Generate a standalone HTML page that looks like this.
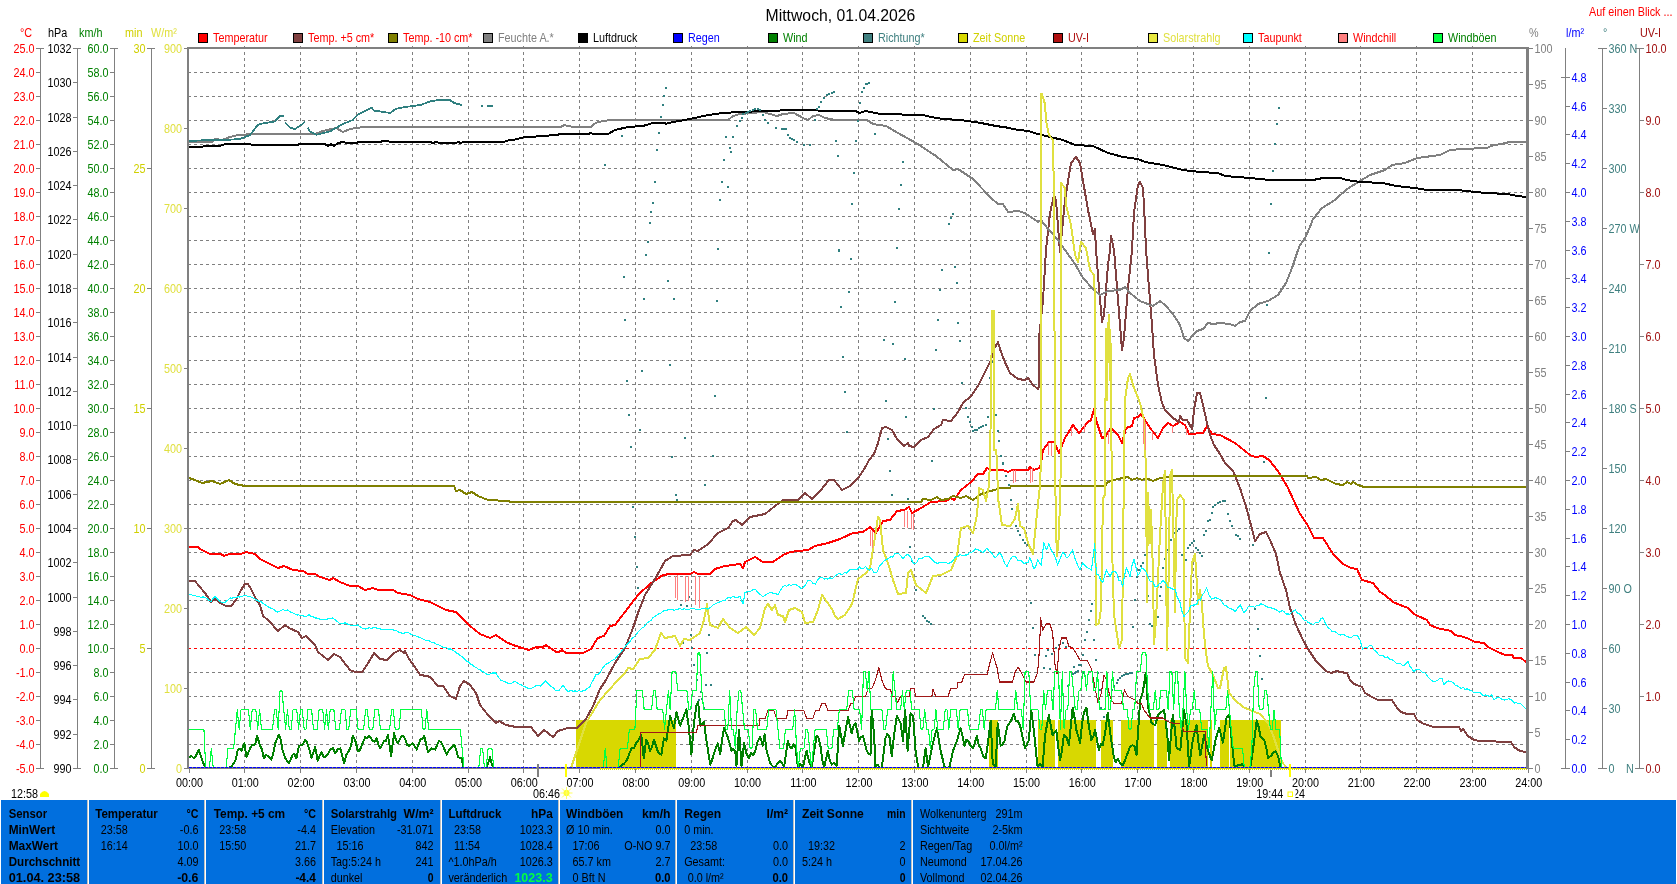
<!DOCTYPE html>
<html lang="de"><head><meta charset="utf-8"><title>Mittwoch, 01.04.2026</title>
<style>html,body{margin:0;padding:0;background:#fff;overflow:hidden}svg{display:block;will-change:transform;opacity:0.999}</style></head>
<body>
<svg width="1677" height="884" viewBox="0 0 1677 884" font-family="'Liberation Sans', Arial, sans-serif" font-size="12">
<rect x="0.0" y="0.0" width="1677.0" height="884.0" fill="#ffffff"/>
<text transform="translate(840.5,20.7) scale(0.985,1)" font-size="16" fill="#000" text-anchor="middle">Mittwoch, 01.04.2026</text>
<text transform="translate(1672.5,16.0) scale(0.9,1)" font-size="12" fill="#ff0000" text-anchor="end">Auf einen Blick ...</text>
<g shape-rendering="crispEdges">
<rect x="198.5" y="33.5" width="9" height="9" fill="#ff0000" stroke="#000" stroke-width="1"/>
<rect x="293.5" y="33.5" width="9" height="9" fill="#804040" stroke="#000" stroke-width="1"/>
<rect x="388.5" y="33.5" width="9" height="9" fill="#808000" stroke="#000" stroke-width="1"/>
<rect x="483.5" y="33.5" width="9" height="9" fill="#808080" stroke="#000" stroke-width="1"/>
<rect x="578.5" y="33.5" width="9" height="9" fill="#000000" stroke="#000" stroke-width="1"/>
<rect x="673.5" y="33.5" width="9" height="9" fill="#0000ff" stroke="#000" stroke-width="1"/>
<rect x="768.5" y="33.5" width="9" height="9" fill="#008000" stroke="#000" stroke-width="1"/>
<rect x="863.5" y="33.5" width="9" height="9" fill="#408080" stroke="#000" stroke-width="1"/>
<rect x="958.5" y="33.5" width="9" height="9" fill="#d8d800" stroke="#000" stroke-width="1"/>
<rect x="1053.5" y="33.5" width="9" height="9" fill="#b01010" stroke="#000" stroke-width="1"/>
<rect x="1148.5" y="33.5" width="9" height="9" fill="#e8e840" stroke="#000" stroke-width="1"/>
<rect x="1243.5" y="33.5" width="9" height="9" fill="#00ffff" stroke="#000" stroke-width="1"/>
<rect x="1338.5" y="33.5" width="9" height="9" fill="#ff8080" stroke="#000" stroke-width="1"/>
<rect x="1433.5" y="33.5" width="9" height="9" fill="#00ff40" stroke="#000" stroke-width="1"/>
</g>
<text transform="translate(213.0,42.0) scale(0.9,1)" font-size="12" fill="#ff0000" text-anchor="start">Temperatur</text>
<text transform="translate(308.0,42.0) scale(0.9,1)" font-size="12" fill="#ff0000" text-anchor="start">Temp. +5 cm*</text>
<text transform="translate(403.0,42.0) scale(0.9,1)" font-size="12" fill="#ff0000" text-anchor="start">Temp. -10 cm*</text>
<text transform="translate(498.0,42.0) scale(0.9,1)" font-size="12" fill="#808080" text-anchor="start">Feuchte A.*</text>
<text transform="translate(593.0,42.0) scale(0.9,1)" font-size="12" fill="#000000" text-anchor="start">Luftdruck</text>
<text transform="translate(688.0,42.0) scale(0.9,1)" font-size="12" fill="#0000ff" text-anchor="start">Regen</text>
<text transform="translate(783.0,42.0) scale(0.9,1)" font-size="12" fill="#008000" text-anchor="start">Wind</text>
<text transform="translate(878.0,42.0) scale(0.9,1)" font-size="12" fill="#408080" text-anchor="start">Richtung*</text>
<text transform="translate(973.0,42.0) scale(0.9,1)" font-size="12" fill="#d0d000" text-anchor="start">Zeit Sonne</text>
<text transform="translate(1068.0,42.0) scale(0.9,1)" font-size="12" fill="#b01010" text-anchor="start">UV-I</text>
<text transform="translate(1163.0,42.0) scale(0.9,1)" font-size="12" fill="#e0e040" text-anchor="start">Solarstrahlg</text>
<text transform="translate(1258.0,42.0) scale(0.9,1)" font-size="12" fill="#ff0000" text-anchor="start">Taupunkt</text>
<text transform="translate(1353.0,42.0) scale(0.9,1)" font-size="12" fill="#ff0000" text-anchor="start">Windchill</text>
<text transform="translate(1448.0,42.0) scale(0.9,1)" font-size="12" fill="#008000" text-anchor="start">Windböen</text>
<g shape-rendering="crispEdges" stroke="#808080" stroke-width="1" stroke-dasharray="3 3">
<line x1="188" y1="72.5" x2="1524" y2="72.5"/>
<line x1="188" y1="96.5" x2="1524" y2="96.5"/>
<line x1="188" y1="120.5" x2="1524" y2="120.5"/>
<line x1="188" y1="144.5" x2="1524" y2="144.5"/>
<line x1="188" y1="168.5" x2="1524" y2="168.5"/>
<line x1="188" y1="192.5" x2="1524" y2="192.5"/>
<line x1="188" y1="216.5" x2="1524" y2="216.5"/>
<line x1="188" y1="240.5" x2="1524" y2="240.5"/>
<line x1="188" y1="264.5" x2="1524" y2="264.5"/>
<line x1="188" y1="288.5" x2="1524" y2="288.5"/>
<line x1="188" y1="312.5" x2="1524" y2="312.5"/>
<line x1="188" y1="336.5" x2="1524" y2="336.5"/>
<line x1="188" y1="360.5" x2="1524" y2="360.5"/>
<line x1="188" y1="384.5" x2="1524" y2="384.5"/>
<line x1="188" y1="408.5" x2="1524" y2="408.5"/>
<line x1="188" y1="432.5" x2="1524" y2="432.5"/>
<line x1="188" y1="456.5" x2="1524" y2="456.5"/>
<line x1="188" y1="480.5" x2="1524" y2="480.5"/>
<line x1="188" y1="504.5" x2="1524" y2="504.5"/>
<line x1="188" y1="528.5" x2="1524" y2="528.5"/>
<line x1="188" y1="552.5" x2="1524" y2="552.5"/>
<line x1="188" y1="576.5" x2="1524" y2="576.5"/>
<line x1="188" y1="600.5" x2="1524" y2="600.5"/>
<line x1="188" y1="624.5" x2="1524" y2="624.5"/>
<line x1="188" y1="672.5" x2="1524" y2="672.5"/>
<line x1="188" y1="696.5" x2="1524" y2="696.5"/>
<line x1="188" y1="720.5" x2="1524" y2="720.5"/>
<line x1="188" y1="744.5" x2="1524" y2="744.5"/>
<line x1="244.5" y1="46" x2="244.5" y2="767"/>
<line x1="300.5" y1="46" x2="300.5" y2="767"/>
<line x1="356.5" y1="46" x2="356.5" y2="767"/>
<line x1="412.5" y1="46" x2="412.5" y2="767"/>
<line x1="468.5" y1="46" x2="468.5" y2="767"/>
<line x1="523.5" y1="46" x2="523.5" y2="767"/>
<line x1="579.5" y1="46" x2="579.5" y2="767"/>
<line x1="635.5" y1="46" x2="635.5" y2="767"/>
<line x1="691.5" y1="46" x2="691.5" y2="767"/>
<line x1="747.5" y1="46" x2="747.5" y2="767"/>
<line x1="802.5" y1="46" x2="802.5" y2="767"/>
<line x1="858.5" y1="46" x2="858.5" y2="767"/>
<line x1="914.5" y1="46" x2="914.5" y2="767"/>
<line x1="970.5" y1="46" x2="970.5" y2="767"/>
<line x1="1026.5" y1="46" x2="1026.5" y2="767"/>
<line x1="1081.5" y1="46" x2="1081.5" y2="767"/>
<line x1="1137.5" y1="46" x2="1137.5" y2="767"/>
<line x1="1193.5" y1="46" x2="1193.5" y2="767"/>
<line x1="1249.5" y1="46" x2="1249.5" y2="767"/>
<line x1="1305.5" y1="46" x2="1305.5" y2="767"/>
<line x1="1360.5" y1="46" x2="1360.5" y2="767"/>
<line x1="1416.5" y1="46" x2="1416.5" y2="767"/>
<line x1="1472.5" y1="46" x2="1472.5" y2="767"/>
</g>
<line x1="188" y1="648.5" x2="1524" y2="648.5" stroke="#ff0000" stroke-width="1" stroke-dasharray="3 3" shape-rendering="crispEdges"/>
<g shape-rendering="crispEdges">
<rect x="576.0" y="720.0" width="99.9" height="49.0" fill="#d8d800"/>
<rect x="989.0" y="720.0" width="8.7" height="49.0" fill="#d8d800"/>
<rect x="1037.6" y="720.0" width="17.0" height="49.0" fill="#d8d800"/>
<rect x="1058.0" y="720.0" width="37.7" height="49.0" fill="#d8d800"/>
<rect x="1101.0" y="720.0" width="12.0" height="49.0" fill="#d8d800"/>
<rect x="1121.0" y="720.0" width="32.5" height="49.0" fill="#d8d800"/>
<rect x="1157.3" y="720.0" width="9.2" height="49.0" fill="#d8d800"/>
<rect x="1170.3" y="720.0" width="37.6" height="49.0" fill="#d8d800"/>
<rect x="1209.9" y="720.0" width="2.5" height="49.0" fill="#d8d800"/>
<rect x="1219.9" y="720.0" width="9.1" height="49.0" fill="#d8d800"/>
<rect x="1230.4" y="720.0" width="50.1" height="49.0" fill="#d8d800"/>
</g>
<g shape-rendering="crispEdges" stroke-linejoin="round" stroke-linecap="butt">
<polyline points="189,547 198,547 200,549 210,554 221,554 224,556 229,554 241,554 246,552 255,554 260,559 278,568 284,566 293,570 303,571 308,574 315,574 320,577 330,580 333,578 340,582 350,586 358,586 365,590 373,588 378,590 393,590 398,593 410,595 418,599 430,602 438,606 446,610 456,612 463,619 470,626 480,634 490,638 496,635 506,642 513,645 529,650 536,647 543,647 546,645 556,652 559,652 562,650 566,653 583,653 591,649 597,639 600,637 604,636 610,626 615,625 628,608 638,595 650,584 663,575 670,574 690,574 694,572 698,574 710,574 715,569 725,566 740,564 743,568 745,562 755,557 763,562 773,562 783,555 790,552 808,550 815,546 828,543 840,539 853,533 863,532 870,527 876,533 883,521 890,520 897,511 904,510 909,507 912,513 921,508 931,502 946,501 951,498 954,500 961,490 971,482 978,474 983,474 987,468 991,470 1003,470 1008,472 1012,470 1028,470 1030,467 1034,470 1039,468 1041,464 1043,450 1049,442 1054,442 1059,453 1065,438 1073,425 1079,433 1088,422 1091,420 1094,409 1096,420 1102,438 1105,437 1111,428 1118,435 1122,443 1126,428 1132,426 1134,418 1138,417 1141,414 1145,420 1150,428 1158,438 1163,428 1168,423 1173,426 1180,422 1185,425 1189,434 1203,433 1207,426 1212,434 1220,435 1235,443 1250,455 1255,457 1263,456 1269,460 1278,471 1288,488 1300,514 1307,524 1314,538 1323,538 1333,554 1343,564 1351,568 1357,569 1362,580 1373,583 1380,592 1385,595 1393,602 1400,605 1408,608 1414,614 1418,616 1427,620 1430,625 1437,628 1451,631 1455,635 1464,637 1469,639 1475,642 1484,643 1488,647 1498,652 1505,655 1512,655 1514,658 1521,658 1526,662" fill="none" stroke="#ff0000" stroke-width="2"/>
<polyline points="189,581 195,581 199,586 205,593 211,602 215,599 220,603 226,606 231,606 236,600 241,590 245,584 248,584 251,589 256,599 260,605 263,616 268,620 278,631 285,625 289,628 298,632 302,638 306,636 315,645 318,652 328,660 334,654 340,657 350,670 355,672 362,672 367,665 374,653 380,659 387,660 394,653 400,650 404,653 405,651 409,659 415,667 420,675 427,676 430,677 438,686 443,686 450,696 456,699 460,686 464,681 470,685 476,693 480,705 488,715 496,723 499,721 506,725 516,727 531,727 538,736 544,730 553,737 558,731 568,728 577,728 586,719 593,706 600,689 606,680 615,663 625,648 633,628 638,613 645,595 655,579 665,561 673,556 690,555 694,550 698,551 708,544 718,533 728,528 733,521 736,520 742,525 750,517 765,514 775,506 782,501 783,500 798,500 805,493 812,499 820,491 829,480 834,480 842,490 850,486 859,477 866,466 869,460 874,454 878,443 882,428 886,427 892,430 897,439 904,446 908,443 909,446 914,447 921,440 928,437 934,429 941,425 943,420 951,421 958,412 963,403 971,396 978,386 986,370 991,360 994,349 998,342 1000,349 1004,360 1010,373 1018,379 1025,380 1028,378 1033,385 1038,389 1039,386 1039,338 1043,300 1046,250 1050,213 1054,195 1056,200 1060,252 1065,200 1071,163 1076,157 1080,163 1088,210 1093,234 1095,229 1096,250 1099,288 1102,322 1104,315 1108,265 1110,250 1111,236 1114,250 1118,300 1122,350 1124,338 1128,288 1132,250 1134,213 1138,185 1140,182 1143,188 1145,225 1146,250 1149,288 1152,325 1154,355 1158,385 1162,403 1165,410 1173,418 1179,422 1180,416 1183,420 1187,420 1192,429 1194,410 1197,393 1200,393 1203,405 1207,423 1210,435 1214,445 1220,454 1225,463 1233,471 1240,488 1247,510 1253,533 1255,541 1260,534 1266,532 1270,540 1276,554 1280,573 1286,590 1290,608 1296,625 1303,640 1308,649 1316,661 1326,671 1331,673 1337,671 1340,672 1347,673 1350,680 1354,684 1362,687 1365,693 1372,697 1378,700 1392,700 1397,708 1401,712 1407,714 1414,714 1417,720 1424,724 1434,727 1459,727 1461,731 1463,729 1468,736 1474,740 1480,741 1494,741 1498,742 1511,742 1514,747 1520,751 1526,752" fill="none" stroke="#804040" stroke-width="2"/>
<polyline points="189,478 195,480 202,483 212,481 220,484 229,480 235,484 245,486 454,486 456,491 460,490 466,494 472,492 478,496 488,500 508,501 511,502 921,502 923,499 931,500 937,497 941,500 948,499 953,496 961,498 966,496 973,500 981,494 991,491 1001,488 1010,488 1011,486 1105,486 1108,482 1118,479 1128,477 1132,480 1137,478 1142,480 1146,478 1153,481 1160,478 1175,476 1307,476 1308,478 1316,477 1321,480 1326,479 1336,484 1343,485 1347,482 1351,484 1353,482 1358,485 1364,487 1526,487" fill="none" stroke="#808000" stroke-width="2"/>
<polyline points="189,142 212,142 215,139 222,140 230,137 238,135 255,134 315,134 323,131 336,128 343,132 350,129 363,127 561,127 564,125 573,127 591,127 594,124 598,122 610,120 728,120 733,116 740,114 763,112 770,114 777,116 783,114 794,113 803,118 808,120 813,116 819,115 825,118 835,120 867,120 873,124 886,126 898,133 916,143 936,156 953,170 958,169 973,179 991,198 998,204 1003,204 1008,212 1018,211 1025,213 1038,222 1041,220 1048,229 1058,240 1065,250 1075,264 1083,278 1093,289 1100,295 1108,291 1120,290 1125,287 1130,293 1140,301 1153,306 1160,301 1165,305 1173,314 1180,325 1184,338 1188,341 1193,335 1197,331 1203,329 1208,323 1213,324 1220,323 1230,324 1235,326 1240,322 1245,321 1250,311 1258,304 1268,301 1278,295 1286,283 1292,268 1298,250 1300,245 1305,238 1310,227 1313,219 1322,208 1335,200 1347,189 1360,181 1370,175 1385,170 1392,165 1405,163 1417,158 1440,155 1450,150 1462,149 1487,148 1491,146 1510,142 1526,142" fill="none" stroke="#808080" stroke-width="2"/>
<polyline points="189,147 217,146 220,146 225,144 250,144 252,145 297,145 300,144 325,144 328,146 331,144 334,146 338,143 343,142 347,143 355,143 360,142 380,142 383,141 388,141 390,142 430,142 433,143 436,142 440,143 456,143 458,142 461,143 463,142 503,142 510,140 513,140 525,137 548,136 550,135 556,135 561,134 588,134 591,133 593,134 600,134 608,134 615,130 628,127 643,126 653,123 665,123 666,124 668,123 690,119 708,115 723,113 740,112 765,111 795,110 840,111 856,111 859,113 866,111 880,114 923,115 931,117 943,119 961,120 981,123 996,126 1010,128 1012,129 1028,131 1038,134 1050,137 1063,140 1075,145 1093,146 1108,153 1123,157 1138,159 1145,162 1163,165 1183,170 1200,172 1218,173 1225,176 1250,178 1270,180 1313,180 1323,178 1341,178 1346,180 1361,182 1383,183 1396,186 1415,188 1427,190 1457,190 1475,192 1487,193 1507,194 1518,196 1526,197" fill="none" stroke="#000000" stroke-width="2"/>
<polyline points="189.0,757.1 191.4,756.0 193.8,758.3 196.3,755.2 198.8,749.5 202.5,760.8 205.0,767.6 207.0,767.6 209.0,767.6 210.9,767.6 212.9,767.6 214.9,767.6 216.9,767.6 218.9,767.6 220.9,767.6 222.9,767.6 224.8,767.6 226.8,767.6 228.8,767.6 231.3,766.7 233.8,763.3 235.7,759.5 237.6,750.8 239.5,748.6 241.4,750.8 244.4,743.3 246.4,757.1 250.1,748.3 252.6,744.5 255.1,744.5 257.1,735.8 260.1,745.8 262.0,749.6 263.9,758.3 265.8,755.1 267.7,755.8 271.4,759.6 273.3,753.1 275.2,743.3 278.9,734.5 280.8,740.1 282.7,750.8 285.2,758.3 288.9,763.3 290.8,759.1 292.7,754.5 294.6,754.4 296.5,758.3 299.0,745.8 302.7,744.5 305.2,739.5 307.1,742.5 309.0,748.3 311.5,758.3 315.2,747.0 317.7,760.8 319.6,755.9 321.5,752.0 323.4,756.9 325.3,757.1 327.8,754.1 330.3,749.5 332.8,748.0 335.3,753.3 337.8,749.2 340.3,748.3 344.0,763.3 346.5,754.6 349.0,750.8 350.9,745.9 352.8,735.8 355.3,740.8 357.8,750.8 359.7,750.5 361.6,745.8 365.3,737.0 367.2,738.5 369.1,735.8 372.8,740.8 374.7,741.8 376.6,738.3 378.5,745.0 380.4,748.3 384.1,740.8 386.0,740.8 387.9,734.5 391.1,755.8 394.1,733.3 396.0,740.4 397.9,743.3 401.6,735.8 403.5,735.9 405.4,739.5 407.3,745.1 409.2,745.8 412.9,743.3 414.8,746.3 416.7,749.5 420.4,739.5 422.3,739.4 424.2,735.8 427.9,752.0 429.8,750.6 431.7,748.3 435.4,749.5 437.3,744.7 439.2,740.8 441.1,742.3 443.0,745.8 446.7,754.5 448.6,750.9 450.5,748.3 454.2,744.5 456.1,749.5 458.0,757.1 461.7,758.3 463.5,767.6 465.4,767.6 467.4,767.6 469.3,767.6 471.3,767.6 473.2,767.6 475.1,767.6 477.1,767.6 479.0,767.6 481.0,767.6 482.9,767.6 484.9,767.6 486.8,767.6 490.0,757.1 493.0,768.0 501.1,768.0 503.0,768.0 504.9,768.0 506.7,768.0 508.6,768.0 510.4,768.0 512.3,768.0 514.2,768.0 516.0,768.0 517.9,768.0 519.7,768.0 521.6,768.0 523.4,768.0 525.3,768.0 527.2,768.0 529.0,768.0 530.9,768.0 532.7,768.0 534.6,768.0 536.4,768.0 538.3,768.0 540.2,768.0 542.0,768.0 543.9,768.0 545.7,768.0 547.6,768.0 549.5,768.0 551.3,768.0 553.2,768.0 555.0,768.0 556.9,768.0 558.7,768.0 560.6,768.0 562.5,768.0 564.3,768.0 566.2,768.0 568.0,768.0 569.9,768.0 571.7,768.0 573.6,768.0 575.5,768.0 577.3,768.0 579.2,768.0 581.0,768.0 582.9,768.0 584.8,768.0 586.6,768.0 588.5,768.0 590.3,768.0 592.2,768.0 594.0,768.0 595.9,768.0 597.8,768.0 599.6,768.0 601.5,768.0 603.3,768.0 605.2,768.0 607.0,768.0 608.9,768.0 610.8,768.0 612.6,768.0 614.5,768.0 616.3,768.0 618.2,767.9 620.1,767.1 622.0,764.7 623.9,763.8 625.7,761.7 627.6,758.3 629.7,752.5 631.7,748.2 633.8,748.3 636.3,743.0 638.8,739.5 641.3,734.5 643.8,758.3 646.3,739.5 648.2,743.6 650.1,750.8 652.0,747.3 653.9,739.5 657.6,750.8 659.5,754.0 661.4,754.5 663.9,738.3 666.4,740.8 670.1,715.7 672.0,722.7 673.9,728.3 676.4,712.0 678.3,719.3 680.2,725.7 683.9,715.7 686.4,709.5 688.9,728.3 691.4,754.5 693.9,723.2 696.4,705.7 698.2,702.0 700.2,725.7 703.9,722.0 706.5,740.8 710.2,764.6 712.1,760.1 714.0,753.3 717.7,743.3 720.2,754.5 722.1,738.9 724.0,728.3 727.7,737.0 729.6,743.5 731.5,750.8 733.4,749.0 735.3,752.0 736.5,765.8 739.0,729.5 741.5,765.8 744.0,743.3 746.5,753.6 749.0,758.3 751.1,752.7 753.2,755.5 755.3,750.8 757.8,740.9 760.3,737.0 762.8,745.8 764.6,734.5 766.6,750.8 770.3,763.3 772.8,766.5 775.3,767.1 777.8,762.8 780.3,760.8 782.2,763.3 784.1,767.1 787.8,740.8 789.7,746.9 791.6,748.3 793.5,744.3 795.4,747.0 797.9,767.1 800.4,764.0 802.9,767.1 806.6,750.8 809.1,761.9 811.6,767.1 814.1,751.5 816.6,735.8 818.5,737.9 820.4,745.8 822.3,759.9 824.2,767.1 827.9,750.8 829.8,760.8 831.7,764.6 834.2,762.5 836.7,765.8 839.2,725.7 842.9,745.8 845.5,730.9 848.0,717.0 851.7,733.3 853.6,725.7 855.5,723.2 859.2,740.8 861.1,737.0 863.0,735.8 866.7,750.8 868.6,753.5 870.5,754.5 871.7,709.5 874.2,735.8 875.5,767.1 877.6,764.7 879.7,768.0 881.8,767.1 885.5,738.3 887.4,733.9 889.3,735.8 891.8,755.8 894.3,733.4 896.8,715.7 900.5,723.2 903.0,740.8 905.1,709.5 907.6,750.8 910.6,713.2 913.1,715.7 915.6,750.8 918.1,767.1 920.6,768.0 923.1,767.1 925.6,748.3 928.1,767.1 931.8,748.3 934.3,737.6 936.9,728.3 940.6,750.8 942.5,758.4 944.4,767.1 946.9,767.8 949.4,767.1 953.1,750.8 955.0,745.6 956.9,740.8 960.6,728.3 962.5,736.2 964.4,745.8 966.3,740.0 968.2,740.8 970.7,746.1 973.2,748.3 976.9,735.8 978.8,745.3 980.7,748.3 983.2,756.6 985.7,758.3 988.2,740.8 990.7,720.7 992.7,763.3 995.7,767.1 997.7,723.2 1000.7,745.8 1002.6,744.4 1004.5,740.8 1007.0,727.0 1011.3,720.0 1013.8,713.9 1015.9,721.1 1017.9,721.2 1020.0,725.2 1022.5,736.6 1025.0,747.8 1026.9,744.7 1028.8,740.2 1031.3,710.2 1033.8,730.2 1036.3,755.3 1037.6,766.5 1040.1,764.0 1042.6,766.5 1045.1,735.2 1048.8,715.2 1050.7,725.3 1052.6,735.2 1056.3,730.2 1058.2,746.3 1060.1,760.3 1062.0,750.1 1063.9,735.2 1066.4,737.0 1068.9,745.3 1072.6,707.7 1074.5,717.4 1076.4,730.2 1080.1,742.7 1082.0,724.4 1083.9,712.7 1086.4,707.7 1088.9,726.4 1091.4,740.2 1093.3,736.7 1095.2,730.2 1098.9,750.3 1100.8,744.1 1102.7,745.3 1105.2,732.9 1107.7,712.7 1110.2,732.7 1113.9,757.8 1115.8,762.1 1117.7,759.0 1120.2,763.4 1122.7,765.3 1125.2,760.0 1127.7,752.8 1130.2,746.3 1132.7,745.3 1134.6,746.4 1136.5,755.3 1140.2,700.2 1142.7,692.7 1145.8,672.6 1147.8,705.2 1151.5,722.7 1153.4,724.2 1155.3,725.2 1157.8,715.4 1160.3,712.7 1164.0,710.2 1165.9,722.7 1167.8,740.2 1169.0,760.3 1170.9,735.7 1172.8,715.2 1174.7,727.7 1176.6,747.8 1180.3,750.3 1182.2,730.0 1184.1,710.2 1186.6,725.2 1189.1,766.5 1192.8,740.2 1194.7,732.2 1196.6,725.2 1198.5,743.0 1200.4,755.3 1204.1,735.2 1206.0,742.9 1207.9,750.3 1211.6,760.3 1213.5,751.4 1215.4,740.2 1219.1,727.7 1221.0,735.2 1222.9,742.7 1226.6,717.7 1229.2,715.2 1231.7,740.2 1234.2,765.3 1236.3,766.6 1238.3,765.0 1240.4,765.3 1242.4,763.8 1244.4,768.0 1246.4,768.0 1248.4,768.0 1250.4,766.5 1252.3,755.0 1254.2,740.2 1256.7,720.2 1258.6,726.9 1260.5,736.5 1264.2,740.2 1266.1,746.8 1268.0,757.8 1271.7,755.3 1273.6,751.7 1275.5,751.5 1278.0,755.6 1280.5,768.0" fill="none" stroke="#008000" stroke-width="2"/>
<g fill="#2f7f7f">
<rect x="480.8" y="104.6" width="2" height="2"/>
<rect x="487.0" y="104.6" width="2" height="2"/>
<rect x="489.0" y="104.6" width="2" height="2"/>
<rect x="490.8" y="104.6" width="2" height="2"/>
<rect x="604.0" y="163.7" width="2" height="2"/>
<rect x="620.8" y="135.0" width="2" height="2"/>
<rect x="644.6" y="253.9" width="2" height="2"/>
<rect x="646.9" y="240.6" width="2" height="2"/>
<rect x="648.9" y="221.8" width="2" height="2"/>
<rect x="649.9" y="210.8" width="2" height="2"/>
<rect x="651.9" y="201.8" width="2" height="2"/>
<rect x="653.9" y="180.7" width="2" height="2"/>
<rect x="655.9" y="148.7" width="2" height="2"/>
<rect x="657.9" y="131.9" width="2" height="2"/>
<rect x="659.9" y="115.6" width="2" height="2"/>
<rect x="661.9" y="103.9" width="2" height="2"/>
<rect x="663.1" y="94.6" width="2" height="2"/>
<rect x="664.9" y="86.6" width="2" height="2"/>
<rect x="717.0" y="247.6" width="2" height="2"/>
<rect x="719.0" y="198.8" width="2" height="2"/>
<rect x="721.0" y="180.7" width="2" height="2"/>
<rect x="723.0" y="159.0" width="2" height="2"/>
<rect x="725.0" y="135.7" width="2" height="2"/>
<rect x="727.0" y="185.8" width="2" height="2"/>
<rect x="728.7" y="146.7" width="2" height="2"/>
<rect x="730.0" y="150.7" width="2" height="2"/>
<rect x="732.0" y="135.7" width="2" height="2"/>
<rect x="736.0" y="124.9" width="2" height="2"/>
<rect x="738.8" y="120.4" width="2" height="2"/>
<rect x="741.0" y="116.6" width="2" height="2"/>
<rect x="742.3" y="113.4" width="2" height="2"/>
<rect x="744.5" y="111.5" width="2" height="2"/>
<rect x="747.0" y="110.5" width="2" height="2"/>
<rect x="749.3" y="109.9" width="2" height="2"/>
<rect x="751.8" y="108.8" width="2" height="2"/>
<rect x="754.3" y="107.9" width="2" height="2"/>
<rect x="756.8" y="108.0" width="2" height="2"/>
<rect x="759.3" y="108.6" width="2" height="2"/>
<rect x="761.8" y="114.0" width="2" height="2"/>
<rect x="764.3" y="118.6" width="2" height="2"/>
<rect x="767.3" y="121.6" width="2" height="2"/>
<rect x="774.8" y="126.7" width="2" height="2"/>
<rect x="781.0" y="127.9" width="2" height="2"/>
<rect x="783.0" y="127.9" width="2" height="2"/>
<rect x="784.5" y="127.9" width="2" height="2"/>
<rect x="786.8" y="133.7" width="2" height="2"/>
<rect x="789.3" y="136.7" width="2" height="2"/>
<rect x="791.0" y="137.9" width="2" height="2"/>
<rect x="793.0" y="139.0" width="2" height="2"/>
<rect x="795.6" y="140.9" width="2" height="2"/>
<rect x="802.6" y="143.7" width="2" height="2"/>
<rect x="808.9" y="143.7" width="2" height="2"/>
<rect x="813.6" y="118.6" width="2" height="2"/>
<rect x="815.6" y="107.9" width="2" height="2"/>
<rect x="817.6" y="106.0" width="2" height="2"/>
<rect x="819.6" y="100.6" width="2" height="2"/>
<rect x="823.2" y="97.0" width="2" height="2"/>
<rect x="825.7" y="94.0" width="2" height="2"/>
<rect x="828.2" y="92.8" width="2" height="2"/>
<rect x="830.7" y="91.6" width="2" height="2"/>
<rect x="833.2" y="90.8" width="2" height="2"/>
<rect x="834.9" y="139.7" width="2" height="2"/>
<rect x="836.9" y="154.7" width="2" height="2"/>
<rect x="837.7" y="248.9" width="2" height="2"/>
<rect x="850.0" y="257.6" width="2" height="2"/>
<rect x="851.0" y="202.8" width="2" height="2"/>
<rect x="852.7" y="171.7" width="2" height="2"/>
<rect x="855.0" y="140.2" width="2" height="2"/>
<rect x="857.0" y="119.6" width="2" height="2"/>
<rect x="858.7" y="101.6" width="2" height="2"/>
<rect x="860.7" y="90.8" width="2" height="2"/>
<rect x="862.7" y="86.6" width="2" height="2"/>
<rect x="864.5" y="83.0" width="2" height="2"/>
<rect x="866.3" y="82.6" width="2" height="2"/>
<rect x="868.0" y="81.8" width="2" height="2"/>
<rect x="873.7" y="132.9" width="2" height="2"/>
<rect x="896.0" y="246.9" width="2" height="2"/>
<rect x="897.8" y="207.8" width="2" height="2"/>
<rect x="899.8" y="183.8" width="2" height="2"/>
<rect x="901.8" y="161.0" width="2" height="2"/>
<rect x="947.9" y="222.8" width="2" height="2"/>
<rect x="949.9" y="217.3" width="2" height="2"/>
<rect x="951.9" y="212.6" width="2" height="2"/>
<rect x="1278.0" y="106.6" width="2" height="2"/>
<rect x="1275.7" y="122.9" width="2" height="2"/>
<rect x="1274.0" y="142.7" width="2" height="2"/>
<rect x="1272.0" y="169.7" width="2" height="2"/>
<rect x="1270.0" y="202.8" width="2" height="2"/>
<rect x="1268.0" y="251.9" width="2" height="2"/>
<rect x="644.6" y="254.0" width="2" height="2"/>
<rect x="622.8" y="275.8" width="2" height="2"/>
<rect x="666.9" y="279.8" width="2" height="2"/>
<rect x="642.8" y="297.8" width="2" height="2"/>
<rect x="672.9" y="297.8" width="2" height="2"/>
<rect x="716.0" y="299.8" width="2" height="2"/>
<rect x="623.8" y="318.9" width="2" height="2"/>
<rect x="668.9" y="363.7" width="2" height="2"/>
<rect x="640.8" y="369.7" width="2" height="2"/>
<rect x="625.8" y="379.7" width="2" height="2"/>
<rect x="714.0" y="394.8" width="2" height="2"/>
<rect x="627.8" y="413.8" width="2" height="2"/>
<rect x="638.8" y="428.8" width="2" height="2"/>
<rect x="683.9" y="436.8" width="2" height="2"/>
<rect x="629.8" y="445.8" width="2" height="2"/>
<rect x="670.9" y="455.9" width="2" height="2"/>
<rect x="711.7" y="454.9" width="2" height="2"/>
<rect x="837.7" y="249.5" width="2" height="2"/>
<rect x="849.7" y="257.8" width="2" height="2"/>
<rect x="848.0" y="290.8" width="2" height="2"/>
<rect x="839.9" y="305.8" width="2" height="2"/>
<rect x="841.9" y="355.9" width="2" height="2"/>
<rect x="843.9" y="390.7" width="2" height="2"/>
<rect x="846.0" y="430.8" width="2" height="2"/>
<rect x="893.8" y="300.8" width="2" height="2"/>
<rect x="883.0" y="338.7" width="2" height="2"/>
<rect x="891.8" y="342.7" width="2" height="2"/>
<rect x="903.8" y="357.9" width="2" height="2"/>
<rect x="885.0" y="399.8" width="2" height="2"/>
<rect x="904.8" y="415.8" width="2" height="2"/>
<rect x="886.8" y="437.8" width="2" height="2"/>
<rect x="940.9" y="268.8" width="2" height="2"/>
<rect x="953.9" y="265.8" width="2" height="2"/>
<rect x="955.9" y="281.8" width="2" height="2"/>
<rect x="938.9" y="288.6" width="2" height="2"/>
<rect x="936.9" y="318.9" width="2" height="2"/>
<rect x="956.9" y="321.9" width="2" height="2"/>
<rect x="958.9" y="339.7" width="2" height="2"/>
<rect x="934.9" y="348.7" width="2" height="2"/>
<rect x="960.9" y="381.7" width="2" height="2"/>
<rect x="932.9" y="407.8" width="2" height="2"/>
<rect x="930.9" y="459.9" width="2" height="2"/>
<rect x="964.9" y="406.8" width="2" height="2"/>
<rect x="966.9" y="415.8" width="2" height="2"/>
<rect x="968.9" y="420.8" width="2" height="2"/>
<rect x="970.9" y="425.8" width="2" height="2"/>
<rect x="972.0" y="429.8" width="2" height="2"/>
<rect x="974.0" y="429.3" width="2" height="2"/>
<rect x="976.0" y="428.8" width="2" height="2"/>
<rect x="978.0" y="427.0" width="2" height="2"/>
<rect x="979.7" y="425.6" width="2" height="2"/>
<rect x="982.0" y="424.6" width="2" height="2"/>
<rect x="984.7" y="423.8" width="2" height="2"/>
<rect x="987.0" y="415.8" width="2" height="2"/>
<rect x="989.0" y="376.7" width="2" height="2"/>
<rect x="991.0" y="361.0" width="2" height="2"/>
<rect x="993.0" y="408.8" width="2" height="2"/>
<rect x="995.0" y="413.8" width="2" height="2"/>
<rect x="997.0" y="429.8" width="2" height="2"/>
<rect x="998.0" y="439.8" width="2" height="2"/>
<rect x="1000.0" y="454.9" width="2" height="2"/>
<rect x="1002.0" y="462.9" width="2" height="2"/>
<rect x="1266.0" y="303.6" width="2" height="2"/>
<rect x="1265.0" y="396.8" width="2" height="2"/>
<rect x="1262.7" y="460.6" width="2" height="2"/>
<rect x="1002.0" y="462.0" width="2" height="2"/>
<rect x="1005.0" y="474.5" width="2" height="2"/>
<rect x="1008.0" y="484.0" width="2" height="2"/>
<rect x="1009.8" y="499.0" width="2" height="2"/>
<rect x="1010.8" y="507.8" width="2" height="2"/>
<rect x="1012.8" y="519.0" width="2" height="2"/>
<rect x="1014.8" y="524.6" width="2" height="2"/>
<rect x="1016.5" y="530.4" width="2" height="2"/>
<rect x="1019.0" y="534.0" width="2" height="2"/>
<rect x="1021.5" y="538.6" width="2" height="2"/>
<rect x="1024.0" y="541.6" width="2" height="2"/>
<rect x="1026.5" y="544.0" width="2" height="2"/>
<rect x="1029.0" y="546.0" width="2" height="2"/>
<rect x="1029.8" y="601.7" width="2" height="2"/>
<rect x="1031.8" y="626.8" width="2" height="2"/>
<rect x="1033.8" y="653.8" width="2" height="2"/>
<rect x="1042.8" y="666.9" width="2" height="2"/>
<rect x="1044.8" y="654.8" width="2" height="2"/>
<rect x="1046.8" y="648.8" width="2" height="2"/>
<rect x="1048.8" y="667.6" width="2" height="2"/>
<rect x="1050.8" y="653.0" width="2" height="2"/>
<rect x="1054.6" y="646.8" width="2" height="2"/>
<rect x="1057.9" y="644.0" width="2" height="2"/>
<rect x="1061.6" y="641.8" width="2" height="2"/>
<rect x="1064.6" y="645.6" width="2" height="2"/>
<rect x="1072.9" y="665.6" width="2" height="2"/>
<rect x="1075.4" y="670.6" width="2" height="2"/>
<rect x="1077.9" y="664.0" width="2" height="2"/>
<rect x="1079.5" y="663.8" width="2" height="2"/>
<rect x="1081.6" y="654.0" width="2" height="2"/>
<rect x="1083.9" y="638.8" width="2" height="2"/>
<rect x="1085.9" y="630.8" width="2" height="2"/>
<rect x="1087.9" y="618.8" width="2" height="2"/>
<rect x="1089.9" y="609.8" width="2" height="2"/>
<rect x="1090.9" y="603.0" width="2" height="2"/>
<rect x="1092.9" y="639.0" width="2" height="2"/>
<rect x="1094.9" y="658.8" width="2" height="2"/>
<rect x="1096.7" y="671.9" width="2" height="2"/>
<rect x="1131.7" y="625.5" width="2" height="2"/>
<rect x="1134.0" y="598.7" width="2" height="2"/>
<rect x="1135.5" y="575.5" width="2" height="2"/>
<rect x="1138.0" y="569.0" width="2" height="2"/>
<rect x="1139.7" y="565.4" width="2" height="2"/>
<rect x="1141.7" y="562.0" width="2" height="2"/>
<rect x="1143.8" y="554.0" width="2" height="2"/>
<rect x="1146.8" y="595.0" width="2" height="2"/>
<rect x="1148.5" y="623.0" width="2" height="2"/>
<rect x="1151.0" y="625.0" width="2" height="2"/>
<rect x="1152.8" y="634.0" width="2" height="2"/>
<rect x="1154.8" y="621.8" width="2" height="2"/>
<rect x="1156.8" y="615.5" width="2" height="2"/>
<rect x="1158.8" y="594.7" width="2" height="2"/>
<rect x="1159.8" y="585.5" width="2" height="2"/>
<rect x="1161.8" y="566.7" width="2" height="2"/>
<rect x="1163.8" y="558.0" width="2" height="2"/>
<rect x="1165.8" y="548.7" width="2" height="2"/>
<rect x="1167.8" y="542.9" width="2" height="2"/>
<rect x="1169.8" y="538.6" width="2" height="2"/>
<rect x="1171.8" y="534.9" width="2" height="2"/>
<rect x="1173.8" y="531.6" width="2" height="2"/>
<rect x="1175.8" y="529.6" width="2" height="2"/>
<rect x="1177.8" y="527.9" width="2" height="2"/>
<rect x="1181.3" y="553.7" width="2" height="2"/>
<rect x="1183.3" y="547.4" width="2" height="2"/>
<rect x="1185.3" y="558.7" width="2" height="2"/>
<rect x="1187.3" y="546.7" width="2" height="2"/>
<rect x="1189.3" y="544.0" width="2" height="2"/>
<rect x="1191.3" y="541.6" width="2" height="2"/>
<rect x="1193.3" y="539.6" width="2" height="2"/>
<rect x="1195.3" y="546.7" width="2" height="2"/>
<rect x="1197.3" y="549.0" width="2" height="2"/>
<rect x="1198.9" y="552.4" width="2" height="2"/>
<rect x="1200.9" y="555.4" width="2" height="2"/>
<rect x="1203.0" y="533.6" width="2" height="2"/>
<rect x="1205.0" y="530.4" width="2" height="2"/>
<rect x="1207.0" y="520.4" width="2" height="2"/>
<rect x="1209.0" y="518.6" width="2" height="2"/>
<rect x="1211.0" y="512.0" width="2" height="2"/>
<rect x="1212.4" y="506.0" width="2" height="2"/>
<rect x="1214.4" y="503.6" width="2" height="2"/>
<rect x="1216.9" y="502.0" width="2" height="2"/>
<rect x="1219.4" y="501.0" width="2" height="2"/>
<rect x="1221.9" y="500.3" width="2" height="2"/>
<rect x="1224.4" y="499.6" width="2" height="2"/>
<rect x="1226.9" y="513.3" width="2" height="2"/>
<rect x="1228.9" y="519.6" width="2" height="2"/>
<rect x="1230.9" y="525.4" width="2" height="2"/>
<rect x="1234.9" y="533.6" width="2" height="2"/>
<rect x="1236.9" y="535.4" width="2" height="2"/>
<rect x="1238.9" y="537.9" width="2" height="2"/>
<rect x="1252.0" y="544.0" width="2" height="2"/>
<rect x="1254.4" y="608.0" width="2" height="2"/>
<rect x="1257.0" y="628.0" width="2" height="2"/>
<rect x="1259.0" y="654.8" width="2" height="2"/>
<rect x="1261.0" y="678.0" width="2" height="2"/>
<rect x="1263.0" y="461.0" width="2" height="2"/>
<rect x="1099.0" y="688.7" width="2" height="2"/>
<rect x="1103.0" y="715.5" width="2" height="2"/>
<rect x="1100.4" y="706.7" width="2" height="2"/>
<rect x="1111.0" y="689.0" width="2" height="2"/>
<rect x="1113.0" y="685.4" width="2" height="2"/>
<rect x="1115.5" y="681.6" width="2" height="2"/>
<rect x="1117.0" y="679.0" width="2" height="2"/>
<rect x="1119.0" y="677.0" width="2" height="2"/>
<rect x="1121.0" y="675.3" width="2" height="2"/>
<rect x="1123.0" y="674.0" width="2" height="2"/>
<rect x="1125.0" y="673.3" width="2" height="2"/>
<rect x="1126.7" y="672.9" width="2" height="2"/>
<rect x="1129.0" y="672.0" width="2" height="2"/>
<rect x="1131.0" y="671.6" width="2" height="2"/>
<rect x="1066.6" y="684.6" width="2" height="2"/>
<rect x="1071.6" y="672.9" width="2" height="2"/>
<rect x="1074.0" y="671.5" width="2" height="2"/>
<rect x="1076.6" y="669.9" width="2" height="2"/>
<rect x="1081.6" y="671.6" width="2" height="2"/>
<rect x="675.0" y="493.6" width="2" height="2"/>
<rect x="676.0" y="499.0" width="2" height="2"/>
<rect x="704.0" y="483.5" width="2" height="2"/>
<rect x="632.0" y="505.6" width="2" height="2"/>
<rect x="634.0" y="536.0" width="2" height="2"/>
<rect x="635.8" y="566.0" width="2" height="2"/>
<rect x="636.8" y="586.7" width="2" height="2"/>
<rect x="679.9" y="603.7" width="2" height="2"/>
<rect x="686.0" y="604.8" width="2" height="2"/>
<rect x="688.0" y="596.0" width="2" height="2"/>
<rect x="708.0" y="633.8" width="2" height="2"/>
<rect x="681.9" y="641.8" width="2" height="2"/>
<rect x="690.0" y="634.0" width="2" height="2"/>
<rect x="691.0" y="647.0" width="2" height="2"/>
<rect x="706.0" y="651.8" width="2" height="2"/>
<rect x="693.0" y="664.0" width="2" height="2"/>
<rect x="888.8" y="469.8" width="2" height="2"/>
<rect x="890.8" y="493.6" width="2" height="2"/>
<rect x="906.8" y="497.8" width="2" height="2"/>
<rect x="908.8" y="545.6" width="2" height="2"/>
<rect x="910.8" y="560.4" width="2" height="2"/>
<rect x="912.8" y="578.0" width="2" height="2"/>
<rect x="914.8" y="588.7" width="2" height="2"/>
<rect x="922.0" y="614.8" width="2" height="2"/>
<rect x="924.0" y="617.0" width="2" height="2"/>
<rect x="926.0" y="619.8" width="2" height="2"/>
<rect x="928.0" y="621.3" width="2" height="2"/>
<rect x="929.6" y="622.5" width="2" height="2"/>
<rect x="930.9" y="460.0" width="2" height="2"/>
<rect x="695.5" y="679.0" width="2" height="2"/>
<rect x="697.5" y="699.0" width="2" height="2"/>
<rect x="699.5" y="691.0" width="2" height="2"/>
<rect x="701.0" y="698.0" width="2" height="2"/>
<rect x="703.0" y="707.0" width="2" height="2"/>
<rect x="705.0" y="683.5" width="2" height="2"/>
<rect x="710.0" y="684.0" width="2" height="2"/>
</g>
<polyline points="189.0,141.0 210.0,140.0 225.0,140.0 240.0,139.0 250.0,135.0 257.6,125.0 262.0,123.5 275.0,121.4 280.0,115.6 284.0,115.6" fill="none" stroke="#2f7f7f" stroke-width="1.8"/>
<polyline points="285.0,122.6 290.0,127.6 295.0,129.0 302.7,124.0 305.0,121.5" fill="none" stroke="#2f7f7f" stroke-width="1.8"/>
<polyline points="307.7,127.6 310.0,131.5 316.5,134.7 330.0,131.4 342.8,124.0 352.8,120.0 357.8,114.6 371.6,107.6 374.0,110.6 390.4,113.0 395.4,109.0 405.4,107.0 420.4,105.0 430.4,101.4 440.4,99.6 449.2,99.6 454.2,103.0 461.7,105.0" fill="none" stroke="#2f7f7f" stroke-width="1.8"/>
<polyline points="640.8,767.7 640.8,732.7 696.4,732.7 697.7,725.9 759.0,725.9 759.8,718.9 765.3,718.4 767.8,710.9 774.0,710.9 776.6,718.4 786.6,718.4 787.8,710.9 804.0,710.9 806.6,718.4 812.9,718.4 815.4,710.9 819.0,710.9 821.7,703.9 825.4,703.9 828.0,710.9 848.0,710.9 850.5,703.9 853.0,703.9 855.5,696.4 865.5,696.4 868.0,688.8 871.7,688.8 875.5,680.0 878.8,667.5 881.8,680.0 885.5,688.8 890.5,690.0 893.0,696.4 895.5,696.4 897.5,702.6 900.5,696.4 909.3,696.4 910.6,688.8 914.3,688.8 915.6,696.4 931.9,696.4 933.0,689.0 935.6,696.4 948.0,696.4 950.6,688.8 956.9,688.8 958.0,682.6 961.9,682.0 964.4,674.6 987.0,674.6 992.5,653.0 997.0,667.5 999.5,682.0 1012.5,682.0 1015.0,672.6 1018.0,667.0 1021.3,672.6 1026.0,682.0 1033.8,682.0 1037.6,672.6 1039.6,647.6 1040.6,617.5 1042.6,630.0 1046.3,624.0 1050.0,624.0 1052.6,632.6 1055.0,665.0 1057.0,674.0 1058.9,650.0 1061.4,638.0 1066.4,638.0 1068.9,646.6 1072.6,647.6 1076.4,653.8 1080.0,660.0 1087.6,661.0 1091.4,668.9 1094.0,682.6 1096.4,695.0 1098.0,702.7 1101.4,692.7 1104.0,675.0 1106.4,680.0 1109.0,692.7 1111.4,700.0 1114.0,703.4 1121.5,703.4 1124.5,690.0 1127.7,696.4 1135.0,700.0 1137.7,703.4 1141.5,703.4 1144.0,710.0 1147.8,715.0 1150.0,718.0 1162.8,718.0 1165.3,720.0 1170.3,722.7 1180.3,724.0 1184.0,731.5 1205.4,731.5 1205.9,755.0 1206.6,766.5" fill="none" stroke="#a01818" stroke-width="1.1"/>
<polyline points="571,768 586,723 600,700 618,680 625,673 628,668 633,669 640,659 648,658 655,650 661,633 665,638 675,636 680,646 684,639 690,640 700,633 704,620 707,604 710,625 718,628 723,619 730,628 738,633 746,627 754,635 760,628 765,608 768,604 772,610 775,605 778,615 783,616 785,622 789,610 795,608 802,612 805,623 813,622 818,610 822,595 827,602 832,609 835,616 838,619 845,615 852,604 858,579 866,573 870,568 874,543 878,517 880,520 883,550 888,563 893,580 898,594 906,593 908,573 911,570 916,585 926,593 933,576 941,575 951,570 957,556 961,528 968,526 973,533 977,515 979,488 983,490 986,501 989,485 990,460 991,400 992,311 994,311 994,420 994,450 996,450 997,460 998,498 1002,525 1010,526 1015,519 1018,504 1020,526 1024,528 1028,543 1033,554 1036,523 1040,485 1041,460 1041,200 1041,94 1042,94 1045,104 1046,120 1049,135 1053,140 1054,200 1055,460 1056,530 1057,556 1059,535 1061,460 1061,250 1061,183 1065,188 1066,205 1071,225 1075,255 1078,262 1081,242 1086,248 1090,270 1094,275 1095,300 1095,500 1096,625 1099,623 1101,608 1103,498 1105,495 1105,470 1106,329 1107,400 1108,330 1109,315 1110,380 1110,330 1111,355 1112,545 1114,615 1119,648 1122,640 1123,560 1124,460 1125,400 1128,378 1130,374 1133,385 1140,403 1144,420 1146,470 1147,602 1148,493 1150,543 1151,510 1153,573 1154,644 1156,620 1160,535 1163,485 1165,471 1166,560 1167,650 1169,560 1170,475 1172,470 1174,560 1175,612 1176,535 1177,500 1180,495 1184,500 1184,585 1185,658 1188,663 1190,610 1192,563 1195,554 1197,585 1198,604 1200,590 1202,605 1204,635 1207,660 1208,666 1213,675 1218,688 1220,688 1224,668 1226,667 1229,693 1235,700 1243,707 1250,710 1260,714 1268,723 1273,735 1278,750 1282,762 1286,767" fill="none" stroke="#e0e040" stroke-width="2"/>
<polyline points="189.0,594.5 191.1,594.7 193.2,595.6 195.4,595.8 197.5,596.5 199.4,596.9 201.2,597.3 203.1,596.9 205.0,597.7 207.0,598.4 209.0,600.6 211.0,601.5 213.0,598.7 215.0,596.5 217.5,598.7 220.0,601.5 222.5,602.7 225.0,602.7 227.5,600.3 230.0,598.0 232.0,598.2 234.0,597.6 236.0,597.6 238.0,596.8 240.0,597.0 242.5,596.2 245.0,595.0 247.5,596.2 250.0,596.5 252.5,597.8 255.0,599.0 256.9,600.3 258.8,601.2 260.7,601.5 262.6,603.0 265.1,604.9 267.5,606.3 270.0,607.8 271.9,608.6 273.9,609.3 275.8,611.4 277.7,612.0 280.2,610.9 282.7,609.8 285.2,610.2 287.7,610.0 290.1,611.8 292.6,612.9 295.0,614.0 297.0,615.0 299.0,614.9 301.0,615.9 303.0,615.9 305.0,616.5 307.0,616.2 309.0,614.8 311.0,616.3 313.0,616.5 315.0,618.0 316.9,618.0 318.9,618.6 320.8,619.9 322.7,619.8 324.7,619.4 326.7,619.2 328.8,618.5 330.8,618.4 332.8,618.0 335.2,619.9 337.6,621.8 340.0,624.0 342.6,623.5 345.3,622.8 347.6,624.0 350.0,625.0 351.9,625.5 353.9,625.2 355.9,625.5 357.8,625.0 360.2,626.8 362.6,628.3 365.0,629.0 367.0,628.8 369.0,627.8 371.0,628.2 373.0,628.0 375.0,627.0 377.5,628.5 380.0,629.0 382.1,629.2 384.3,629.5 386.4,629.1 388.6,629.9 390.8,629.8 392.9,629.8 395.3,630.5 397.6,631.3 400.0,632.8 402.2,633.1 404.4,633.1 406.6,632.3 408.7,632.7 410.9,634.5 413.0,635.0 415.3,635.8 417.7,636.4 420.0,637.8 422.1,638.3 424.2,639.6 426.2,640.5 428.3,640.3 430.4,641.6 432.4,642.6 434.4,642.7 436.4,644.4 438.4,644.8 440.4,645.8 442.4,646.9 444.4,647.7 446.5,647.7 448.5,649.0 450.5,649.0 452.5,650.1 454.5,651.2 456.5,653.2 458.5,653.9 460.5,655.8 462.5,657.1 464.5,659.0 466.5,660.9 468.5,661.9 470.5,664.0 472.5,664.7 474.5,666.8 476.5,667.4 478.5,669.4 480.5,670.0 482.4,671.7 484.2,672.3 486.1,673.6 488.0,674.9 489.9,674.0 491.8,673.0 495.5,673.0 498.1,676.7 500.6,680.0 502.6,680.9 504.6,681.6 506.6,682.4 508.6,683.6 510.6,683.8 512.5,682.6 514.4,681.3 516.5,682.4 518.7,683.9 520.9,684.5 523.0,686.0 524.9,686.5 526.8,688.0 528.7,688.1 530.6,688.8 533.1,687.5 535.6,686.0 538.1,685.4 540.6,686.0 543.1,683.4 545.6,681.0 548.1,683.6 550.6,686.0 553.2,687.7 555.7,690.6 559.4,690.0 563.0,685.0 565.0,688.1 567.0,691.0 569.0,691.2 571.0,690.5 573.0,691.2 575.0,691.0 577.0,691.2 579.0,690.8 581.0,691.2 583.0,691.0 585.2,690.2 587.3,688.2 589.5,687.6 591.6,682.9 593.6,679.4 595.7,675.0 597.9,674.4 600.0,672.6 602.5,668.4 605.0,665.0 607.0,663.7 609.0,662.7 611.0,661.1 613.0,660.0 615.0,659.0 617.1,656.2 619.2,653.8 621.3,651.7 623.4,648.7 625.5,646.3 627.6,644.0 629.7,642.1 631.7,638.6 633.8,637.1 635.9,635.0 637.9,632.0 640.0,630.0 641.9,627.9 643.8,627.1 645.6,624.5 647.5,622.7 649.4,621.5 651.2,620.2 653.1,617.6 655.0,616.5 657.0,614.9 659.0,613.6 661.0,613.1 663.0,611.2 665.0,610.0 666.9,610.5 668.8,609.3 670.8,609.5 672.7,609.9 674.6,610.2 676.5,609.5 678.5,609.0 680.4,608.8 682.3,609.4 684.2,608.7 686.2,609.6 688.1,609.6 690.0,609.0 692.0,608.5 693.9,608.6 695.9,609.5 697.9,609.2 699.8,609.5 701.8,608.8 703.8,608.4 705.7,608.7 707.7,609.0 710.1,607.8 712.6,605.3 715.0,604.0 717.0,602.9 718.9,602.2 720.9,601.4 722.9,600.5 724.8,600.5 726.8,598.4 728.8,597.4 730.7,598.0 732.7,596.5 735.1,597.1 737.6,597.3 740.0,596.5 743.0,604.0 745.0,592.7 747.0,591.9 749.0,591.9 751.0,591.2 753.0,589.3 755.0,589.0 757.0,591.3 758.9,593.3 760.8,594.9 762.8,596.5 765.2,595.3 767.6,593.6 770.0,592.7 772.0,592.9 773.9,593.3 775.8,593.5 777.8,594.7 780.3,590.7 782.8,586.5 784.8,585.7 786.9,586.2 788.9,584.5 790.9,585.5 793.0,584.7 795.0,584.0 797.0,585.6 799.0,586.5 800.9,588.4 802.9,587.7 805.3,585.4 807.6,580.6 810.0,580.0 812.7,583.0 815.4,584.0 817.7,579.5 820.0,577.7 822.0,577.2 824.0,579.0 826.0,578.8 828.0,579.0 830.1,577.8 832.1,579.1 834.2,576.9 836.3,575.0 838.3,573.8 840.4,574.0 842.5,574.7 844.6,572.5 846.7,573.0 848.8,570.5 850.9,569.2 853.0,569.7 855.1,569.3 857.2,569.9 859.2,566.7 861.3,568.7 863.4,568.6 865.5,566.4 867.5,568.9 869.5,570.2 871.5,568.2 873.5,572.0 875.5,572.7 877.5,571.6 879.5,565.8 881.5,564.2 883.5,561.6 885.5,560.0 887.4,559.1 889.3,557.7 891.1,556.8 893.0,557.0 894.9,552.9 896.8,553.9 898.9,553.8 900.9,555.7 903.0,558.9 905.5,555.3 908.0,554.7 910.5,557.0 913.0,562.7 915.0,563.6 917.0,562.1 919.0,558.0 921.0,558.7 923.0,557.7 925.5,556.3 928.0,556.4 929.9,557.2 931.8,559.0 933.7,561.7 935.6,562.7 937.7,563.3 939.7,562.6 941.8,562.1 943.9,562.9 945.9,562.3 948.0,564.0 950.0,562.7 952.0,561.8 954.0,559.0 956.0,556.2 958.0,556.4 959.9,554.8 961.9,555.2 963.8,555.8 965.7,555.0 967.7,554.9 969.7,552.1 971.7,552.5 973.7,550.6 975.7,548.9 978.1,549.9 980.6,550.9 983.0,552.7 985.0,550.3 987.0,548.0 989.2,551.2 991.4,552.5 993.5,556.1 995.7,557.7 997.6,555.0 999.5,552.7 1001.4,554.9 1003.2,559.7 1005.1,564.0 1007.0,566.4 1010.0,560.0 1012.5,556.4 1015.0,556.1 1017.5,560.0 1019.6,560.3 1021.8,561.0 1023.9,563.9 1026.0,562.7 1028.0,562.4 1030.0,557.7 1031.9,562.7 1033.8,569.0 1035.7,566.5 1037.6,560.0 1041.3,565.0 1043.8,542.6 1046.3,550.0 1048.8,544.0 1051.3,550.5 1053.8,554.0 1055.7,558.3 1057.6,565.0 1060.1,558.7 1062.6,552.7 1064.5,553.3 1066.4,557.7 1068.5,556.7 1070.5,553.4 1072.6,550.0 1075.1,558.6 1077.5,564.8 1080.0,570.0 1082.6,562.7 1084.8,565.4 1087.0,567.5 1089.2,568.5 1091.4,570.0 1094.7,544.0 1096.4,574.0 1098.5,574.9 1100.6,580.2 1102.7,582.7 1106.4,570.0 1110.0,576.5 1112.5,571.5 1115.0,571.5 1116.9,573.5 1118.8,580.4 1120.8,580.5 1122.7,586.5 1124.6,575.1 1126.5,567.7 1130.0,576.5 1132.0,565.7 1134.0,559.0 1137.7,575.0 1139.6,573.3 1141.5,567.7 1143.6,569.0 1145.7,571.2 1147.8,576.5 1150.2,581.5 1152.6,581.3 1155.0,586.5 1157.0,586.6 1158.9,584.1 1160.8,583.3 1162.8,580.0 1165.3,582.7 1167.7,587.5 1170.0,587.7 1172.7,589.2 1175.3,590.0 1177.5,598.1 1179.7,600.9 1181.8,611.2 1184.0,616.5 1186.2,613.7 1188.4,611.8 1190.6,605.9 1192.8,605.0 1194.7,605.0 1196.6,604.7 1198.5,599.1 1200.4,600.0 1202.5,595.0 1204.5,592.1 1206.6,587.7 1209.1,595.0 1211.6,599.0 1213.8,598.0 1216.0,597.9 1218.2,598.5 1220.4,600.0 1222.3,602.5 1224.2,605.2 1226.1,605.3 1228.0,607.8 1230.5,608.4 1232.9,609.7 1235.4,611.5 1237.9,607.5 1240.4,605.0 1244.0,613.0 1246.1,610.4 1248.3,606.6 1250.4,606.5 1252.5,606.2 1254.6,607.3 1256.7,605.2 1258.8,605.9 1260.9,603.8 1263.0,604.5 1265.1,605.9 1267.2,606.9 1269.2,607.5 1271.3,607.9 1273.4,608.6 1275.5,609.5 1277.6,610.7 1279.7,612.2 1281.8,610.7 1283.8,611.3 1285.9,614.0 1288.0,614.0 1289.9,614.2 1291.8,612.1 1293.6,610.8 1295.5,610.0 1297.6,613.2 1299.8,614.1 1301.9,616.8 1304.0,620.0 1306.2,620.3 1308.5,622.8 1310.8,623.2 1313.0,625.0 1315.0,622.8 1317.0,622.7 1319.0,622.0 1321.0,618.6 1323.0,617.8 1325.5,623.4 1328.0,627.8 1330.0,628.8 1332.0,631.3 1334.0,631.8 1336.0,632.1 1338.0,634.0 1340.0,635.0 1342.2,634.8 1344.4,634.8 1346.6,636.7 1348.8,637.0 1351.0,638.0 1353.0,636.0 1355.0,635.6 1357.0,635.0 1360.0,640.0 1362.6,649.0 1364.9,647.6 1367.2,648.1 1369.4,645.4 1371.7,645.6 1374.0,650.1 1376.2,651.6 1378.5,654.7 1380.8,655.6 1383.0,655.8 1385.2,657.4 1387.5,657.0 1389.4,659.1 1391.3,659.4 1393.2,660.3 1395.0,662.1 1396.9,663.7 1398.8,663.7 1400.7,663.8 1402.6,665.3 1404.5,665.0 1408.0,661.5 1409.9,666.3 1411.7,668.2 1413.6,671.7 1416.0,669.4 1418.2,669.4 1420.5,670.3 1422.8,672.6 1425.0,672.8 1427.8,676.7 1430.5,679.6 1432.7,681.3 1434.8,681.4 1437.0,680.7 1439.5,678.8 1442.0,678.5 1444.0,685.0 1446.3,682.1 1448.6,681.0 1450.9,681.5 1453.2,682.6 1455.4,685.4 1457.7,686.0 1459.6,687.7 1461.5,688.5 1463.3,687.2 1465.2,689.6 1467.1,688.6 1469.0,689.8 1471.3,690.5 1473.5,692.4 1475.8,692.7 1478.1,692.0 1480.3,692.6 1482.6,695.4 1484.9,695.0 1487.2,695.2 1489.4,696.6 1491.7,695.0 1494.0,700.0 1497.3,697.3 1499.2,697.5 1501.2,698.9 1503.1,699.9 1505.0,700.0 1508.6,698.8 1511.3,699.4 1514.0,703.0 1516.3,702.8 1518.7,703.5 1521.0,704.0 1523.3,706.3 1525.6,708.6" fill="none" stroke="#00ffff" stroke-width="1.1"/>
<g stroke="#ff8080" stroke-width="1">
<line x1="675" y1="575" x2="675.5" y2="598"/>
<line x1="677.5" y1="575" x2="678.0" y2="600"/>
<line x1="685" y1="575" x2="685.5" y2="602"/>
<line x1="688" y1="575" x2="688.5" y2="601"/>
<line x1="695" y1="575" x2="695.5" y2="605"/>
<line x1="699" y1="575" x2="699.5" y2="607.8"/>
<line x1="870" y1="530" x2="870.5" y2="546"/>
<line x1="872.5" y1="531" x2="873.0" y2="547.7"/>
<line x1="904.5" y1="511" x2="905.0" y2="527"/>
<line x1="907" y1="510" x2="907.5" y2="527.6"/>
<line x1="911" y1="514" x2="911.5" y2="529"/>
<line x1="913" y1="512" x2="913.5" y2="530"/>
<line x1="1013" y1="470" x2="1013.5" y2="483"/>
<line x1="1015" y1="470" x2="1015.5" y2="482"/>
<line x1="1030" y1="469" x2="1030.5" y2="483"/>
<line x1="1032" y1="468" x2="1032.5" y2="482"/>
<line x1="1048" y1="443" x2="1048.5" y2="455"/>
<line x1="1051" y1="443" x2="1051.5" y2="456"/>
<line x1="1071" y1="428" x2="1071.5" y2="436"/>
<line x1="1084" y1="424" x2="1084.5" y2="432"/>
<line x1="1108" y1="432" x2="1108.5" y2="444"/>
<line x1="1143" y1="418" x2="1143.5" y2="444"/>
<line x1="1145" y1="421" x2="1145.5" y2="450"/>
<line x1="1152" y1="432" x2="1152.5" y2="440"/>
<line x1="1172" y1="426" x2="1172.5" y2="433"/>
<line x1="1186" y1="428" x2="1186.5" y2="435"/>
</g>
<polyline points="189.0,729.1 190.9,729.1 192.7,729.1 194.6,729.1 196.4,729.1 198.3,729.1 200.1,729.1 202.0,729.1 203.9,729.1 205.7,767.5 207.6,767.5 209.4,767.5 211.3,748.3 213.2,767.5 215.0,767.5 216.9,767.5 218.7,767.5 220.6,767.5 222.4,767.5 224.3,767.5 226.2,767.5 228.0,748.3 229.9,748.3 231.7,748.3 233.6,748.3 235.5,729.1 237.3,709.9 239.2,729.1 241.0,709.9 242.9,709.9 244.7,709.9 246.6,709.9 248.5,709.9 250.3,729.1 252.2,709.9 254.0,709.9 255.9,709.9 257.7,729.1 259.6,709.9 261.5,729.1 263.3,729.1 265.2,729.1 267.0,729.1 268.9,729.1 270.8,729.1 272.6,729.1 274.5,709.9 276.3,709.9 278.2,729.1 280.0,690.7 281.9,690.7 283.8,709.9 285.6,729.1 287.5,709.9 289.3,729.1 291.2,729.1 293.0,709.9 294.9,709.9 296.8,709.9 298.6,729.1 300.5,709.9 302.3,709.9 304.2,729.1 306.1,729.1 307.9,709.9 309.8,709.9 311.6,709.9 313.5,729.1 315.3,729.1 317.2,729.1 319.1,709.9 320.9,709.9 322.8,709.9 324.6,729.1 326.5,709.9 328.4,729.1 330.2,709.9 332.1,709.9 333.9,709.9 335.8,729.1 337.6,729.1 339.5,729.1 341.4,709.9 343.2,709.9 345.1,709.9 346.9,729.1 348.8,729.1 350.6,709.9 352.5,709.9 354.4,709.9 356.2,709.9 358.1,729.1 359.9,729.1 361.8,729.1 363.7,729.1 365.5,709.9 367.4,709.9 369.2,729.1 371.1,729.1 372.9,729.1 374.8,709.9 376.7,709.9 378.5,709.9 380.4,729.1 382.2,729.1 384.1,729.1 385.9,729.1 387.8,729.1 389.7,729.1 391.5,709.9 393.4,709.9 395.2,729.1 397.1,729.1 399.0,729.1 400.8,709.9 402.7,709.9 404.5,709.9 406.4,709.9 408.2,709.9 410.1,709.9 412.0,709.9 413.8,709.9 415.7,709.9 417.5,709.9 419.4,709.9 421.3,709.9 423.1,729.1 425.0,729.1 426.8,709.9 428.7,729.1 430.5,729.1 432.4,729.1 434.3,729.1 436.1,729.1 438.0,729.1 439.8,729.1 441.7,729.1 443.5,729.1 445.4,729.1 447.3,729.1 449.1,729.1 451.0,729.1 452.8,729.1 454.7,729.1 456.6,729.1 458.4,729.1 460.3,729.1 462.1,748.3 464.0,767.5 465.8,767.5 467.7,767.5 469.6,767.5 471.4,767.5 473.3,767.5 475.1,767.5 477.0,767.5 478.8,767.5 480.7,748.3 482.6,748.3 484.4,767.5 486.3,767.5 488.1,748.3 490.0,748.3 491.9,748.3 493.7,767.5 495.6,767.5 497.4,767.5 499.3,767.5 501.1,767.5 503.0,767.5 504.9,767.5 506.7,767.5 508.6,767.5 510.4,767.5 512.3,767.5 514.2,767.5 516.0,767.5 517.9,767.5 519.7,767.5 521.6,767.5 523.4,767.5 525.3,767.5 527.2,767.5 529.0,767.5 530.9,767.5 532.7,767.5 534.6,767.5 536.4,767.5 538.3,767.5 540.2,767.5 542.0,767.5 543.9,767.5 545.7,767.5 547.6,767.5 549.5,767.5 551.3,767.5 553.2,767.5 555.0,767.5 556.9,767.5 558.7,767.5 560.6,767.5 562.5,767.5 564.3,767.5 566.2,767.5 568.0,767.5 569.9,767.5 571.7,767.5 573.6,767.5 575.5,767.5 577.3,767.5 579.2,767.5 581.0,767.5 582.9,767.5 584.8,767.5 586.6,767.5 588.5,767.5 590.3,767.5 592.2,767.5 594.0,767.5 595.9,767.5 597.8,767.5 599.6,767.5 601.5,767.5 603.3,767.5 605.2,748.3 607.0,767.5 608.9,767.5 610.8,767.5 612.6,767.5 614.5,767.5 616.3,767.5 618.2,767.5 620.1,748.3 621.9,748.3 623.8,748.3 625.6,748.3 627.5,748.3 629.3,729.1 631.2,729.1 633.1,729.1 634.9,729.1 636.8,690.7 638.6,690.7 640.5,690.7 642.4,690.7 644.2,709.9 646.1,709.9 647.9,709.9 649.8,709.9 651.6,709.9 653.5,690.7 655.4,690.7 657.2,709.9 659.1,709.9 660.9,709.9 662.8,709.9 664.6,729.1 666.5,709.9 668.4,690.7 670.2,709.9 672.1,671.5 673.9,671.5 675.8,671.5 677.7,690.7 679.5,690.7 681.4,690.7 683.2,690.7 685.1,690.7 686.9,690.7 688.8,709.9 690.7,709.9 692.5,690.7 694.4,690.7 696.2,690.7 698.1,652.3 699.9,652.3 701.8,690.7 703.7,709.9 705.5,709.9 707.4,709.9 709.2,709.9 711.1,709.9 713.0,709.9 714.8,709.9 716.7,709.9 718.5,709.9 720.4,709.9 722.2,709.9 724.1,709.9 726.0,729.1 727.8,729.1 729.7,690.7 731.5,729.1 733.4,729.1 735.3,748.3 737.1,709.9 739.0,690.7 740.8,690.7 742.7,709.9 744.5,729.1 746.4,729.1 748.3,729.1 750.1,748.3 752.0,748.3 753.8,709.9 755.7,709.9 757.5,729.1 759.4,729.1 761.3,729.1 763.1,729.1 765.0,729.1 766.8,729.1 768.7,709.9 770.6,709.9 772.4,709.9 774.3,709.9 776.1,709.9 778.0,729.1 779.8,748.3 781.7,748.3 783.6,748.3 785.4,729.1 787.3,729.1 789.1,729.1 791.0,729.1 792.8,729.1 794.7,709.9 796.6,748.3 798.4,767.5 800.3,748.3 802.1,748.3 804.0,748.3 805.9,729.1 807.7,729.1 809.6,748.3 811.4,767.5 813.3,748.3 815.1,729.1 817.0,729.1 818.9,729.1 820.7,729.1 822.6,729.1 824.4,729.1 826.3,729.1 828.2,748.3 830.0,748.3 831.9,748.3 833.7,729.1 835.6,729.1 837.4,729.1 839.3,709.9 841.2,709.9 843.0,709.9 844.9,709.9 846.7,709.9 848.6,690.7 850.4,690.7 852.3,690.7 854.2,709.9 856.0,709.9 857.9,709.9 859.7,709.9 861.6,729.1 863.5,671.5 865.3,671.5 867.2,690.7 869.0,671.5 870.9,709.9 872.7,709.9 874.6,709.9 876.5,709.9 878.3,709.9 880.2,709.9 882.0,709.9 883.9,729.1 885.7,729.1 887.6,709.9 889.5,709.9 891.3,709.9 893.2,671.5 895.0,690.7 896.9,709.9 898.8,709.9 900.6,709.9 902.5,690.7 904.3,709.9 906.2,690.7 908.0,690.7 909.9,690.7 911.8,709.9 913.6,709.9 915.5,709.9 917.3,709.9 919.2,709.9 921.1,729.1 922.9,729.1 924.8,709.9 926.6,729.1 928.5,729.1 930.3,748.3 932.2,729.1 934.1,729.1 935.9,709.9 937.8,729.1 939.6,729.1 941.5,729.1 943.3,729.1 945.2,709.9 947.1,709.9 948.9,729.1 950.8,709.9 952.6,709.9 954.5,709.9 956.4,709.9 958.2,729.1 960.1,709.9 961.9,709.9 963.8,709.9 965.6,709.9 967.5,709.9 969.4,729.1 971.2,729.1 973.1,729.1 974.9,729.1 976.8,729.1 978.6,729.1 980.5,709.9 982.4,709.9 984.2,729.1 986.1,709.9 987.9,709.9 989.8,709.9 991.7,709.9 993.5,709.9 995.4,709.9 997.2,690.7 999.1,709.9 1000.9,709.9 1002.8,709.9 1004.7,709.9 1006.5,709.9 1008.4,709.9 1010.2,709.9 1012.1,709.9 1014.0,709.9 1015.8,690.7 1017.7,709.9 1019.5,709.9 1021.4,709.9 1023.2,729.1 1025.1,671.5 1027.0,671.5 1028.8,671.5 1030.7,709.9 1032.5,709.9 1034.4,709.9 1036.2,709.9 1038.1,709.9 1040.0,729.1 1041.8,729.1 1043.7,690.7 1045.5,709.9 1047.4,690.7 1049.3,690.7 1051.1,690.7 1053.0,709.9 1054.8,671.5 1056.7,671.5 1058.5,671.5 1060.4,729.1 1062.3,671.5 1064.1,729.1 1066.0,709.9 1067.8,709.9 1069.7,671.5 1071.5,671.5 1073.4,690.7 1075.3,709.9 1077.1,709.9 1079.0,690.7 1080.8,690.7 1082.7,671.5 1084.6,671.5 1086.4,690.7 1088.3,671.5 1090.1,671.5 1092.0,671.5 1093.8,690.7 1095.7,690.7 1097.6,671.5 1099.4,709.9 1101.3,709.9 1103.1,709.9 1105.0,709.9 1106.9,671.5 1108.7,709.9 1110.6,709.9 1112.4,671.5 1114.3,690.7 1116.1,690.7 1118.0,690.7 1119.9,690.7 1121.7,690.7 1123.6,709.9 1125.4,709.9 1127.3,709.9 1129.1,729.1 1131.0,729.1 1132.9,709.9 1134.7,709.9 1136.6,671.5 1138.4,671.5 1140.3,671.5 1142.2,652.3 1144.0,652.3 1145.9,652.3 1147.7,690.7 1149.6,709.9 1151.4,709.9 1153.3,709.9 1155.2,690.7 1157.0,709.9 1158.9,709.9 1160.7,690.7 1162.6,690.7 1164.4,690.7 1166.3,690.7 1168.2,709.9 1170.0,671.5 1171.9,671.5 1173.7,709.9 1175.6,671.5 1177.5,671.5 1179.3,709.9 1181.2,729.1 1183.0,709.9 1184.9,671.5 1186.7,709.9 1188.6,729.1 1190.5,709.9 1192.3,709.9 1194.2,690.7 1196.0,709.9 1197.9,709.9 1199.8,709.9 1201.6,729.1 1203.5,729.1 1205.3,729.1 1207.2,729.1 1209.0,748.3 1210.9,709.9 1212.8,671.5 1214.6,729.1 1216.5,709.9 1218.3,709.9 1220.2,709.9 1222.0,709.9 1223.9,709.9 1225.8,709.9 1227.6,690.7 1229.5,709.9 1231.3,729.1 1233.2,748.3 1235.1,748.3 1236.9,748.3 1238.8,748.3 1240.6,748.3 1242.5,748.3 1244.3,767.5 1246.2,767.5 1248.1,767.5 1249.9,767.5 1251.8,748.3 1253.6,690.7 1255.5,671.5 1257.3,671.5 1259.2,709.9 1261.1,709.9 1262.9,709.9 1264.8,690.7 1266.6,690.7 1268.5,709.9 1270.4,729.1 1272.2,729.1 1274.1,709.9 1275.9,729.1 1277.8,729.1 1279.6,729.1 1281.5,767.5 1283.4,767.5 1285.2,767.5 1287.1,767.5 1288.9,767.5 1290.8,767.5" fill="none" stroke="#00ff40" stroke-width="1.1"/>
</g>
<g shape-rendering="crispEdges">
<line x1="189" y1="768.5" x2="600" y2="768.5" stroke="#808080" stroke-width="1"/>
<line x1="600" y1="768.5" x2="1527" y2="768.5" stroke="#d8d800" stroke-width="1"/>
<line x1="189" y1="767.5" x2="1527" y2="767.5" stroke="#808080" stroke-width="1"/>
<line x1="189" y1="767.5" x2="1527" y2="767.5" stroke="#0000ff" stroke-width="1" stroke-dasharray="3 1"/>
<line x1="600" y1="769.5" x2="1527" y2="769.5" stroke="#d8d800" stroke-width="1" stroke-dasharray="1 1"/>
<rect x="187.0" y="47.0" width="2.0" height="722.0" fill="#808080"/>
<rect x="187.0" y="47.0" width="1342.0" height="2.0" fill="#808080"/>
<rect x="1526.0" y="47.0" width="3.0" height="722.0" fill="#808080"/>
<line x1="189.5" y1="769" x2="189.5" y2="773" stroke="#808080" stroke-width="1"/>
<line x1="244.5" y1="769" x2="244.5" y2="773" stroke="#808080" stroke-width="1"/>
<line x1="300.5" y1="769" x2="300.5" y2="773" stroke="#808080" stroke-width="1"/>
<line x1="356.5" y1="769" x2="356.5" y2="773" stroke="#808080" stroke-width="1"/>
<line x1="412.5" y1="769" x2="412.5" y2="773" stroke="#808080" stroke-width="1"/>
<line x1="468.5" y1="769" x2="468.5" y2="773" stroke="#808080" stroke-width="1"/>
<line x1="523.5" y1="769" x2="523.5" y2="773" stroke="#808080" stroke-width="1"/>
<line x1="579.5" y1="769" x2="579.5" y2="773" stroke="#808080" stroke-width="1"/>
<line x1="635.5" y1="769" x2="635.5" y2="773" stroke="#808080" stroke-width="1"/>
<line x1="691.5" y1="769" x2="691.5" y2="773" stroke="#808080" stroke-width="1"/>
<line x1="747.5" y1="769" x2="747.5" y2="773" stroke="#808080" stroke-width="1"/>
<line x1="802.5" y1="769" x2="802.5" y2="773" stroke="#808080" stroke-width="1"/>
<line x1="858.5" y1="769" x2="858.5" y2="773" stroke="#808080" stroke-width="1"/>
<line x1="914.5" y1="769" x2="914.5" y2="773" stroke="#808080" stroke-width="1"/>
<line x1="970.5" y1="769" x2="970.5" y2="773" stroke="#808080" stroke-width="1"/>
<line x1="1026.5" y1="769" x2="1026.5" y2="773" stroke="#808080" stroke-width="1"/>
<line x1="1081.5" y1="769" x2="1081.5" y2="773" stroke="#808080" stroke-width="1"/>
<line x1="1137.5" y1="769" x2="1137.5" y2="773" stroke="#808080" stroke-width="1"/>
<line x1="1193.5" y1="769" x2="1193.5" y2="773" stroke="#808080" stroke-width="1"/>
<line x1="1249.5" y1="769" x2="1249.5" y2="773" stroke="#808080" stroke-width="1"/>
<line x1="1305.5" y1="769" x2="1305.5" y2="773" stroke="#808080" stroke-width="1"/>
<line x1="1360.5" y1="769" x2="1360.5" y2="773" stroke="#808080" stroke-width="1"/>
<line x1="1416.5" y1="769" x2="1416.5" y2="773" stroke="#808080" stroke-width="1"/>
<line x1="1472.5" y1="769" x2="1472.5" y2="773" stroke="#808080" stroke-width="1"/>
<line x1="1528.5" y1="769" x2="1528.5" y2="773" stroke="#808080" stroke-width="1"/>
</g>
<text transform="translate(189.5,787.0) scale(0.9,1)" font-size="12" fill="#000" text-anchor="middle">00:00</text>
<text transform="translate(245.3,787.0) scale(0.9,1)" font-size="12" fill="#000" text-anchor="middle">01:00</text>
<text transform="translate(301.1,787.0) scale(0.9,1)" font-size="12" fill="#000" text-anchor="middle">02:00</text>
<text transform="translate(356.9,787.0) scale(0.9,1)" font-size="12" fill="#000" text-anchor="middle">03:00</text>
<text transform="translate(412.7,787.0) scale(0.9,1)" font-size="12" fill="#000" text-anchor="middle">04:00</text>
<text transform="translate(468.5,787.0) scale(0.9,1)" font-size="12" fill="#000" text-anchor="middle">05:00</text>
<text transform="translate(524.3,787.0) scale(0.9,1)" font-size="12" fill="#000" text-anchor="middle">06:00</text>
<text transform="translate(580.1,787.0) scale(0.9,1)" font-size="12" fill="#000" text-anchor="middle">07:00</text>
<text transform="translate(635.9,787.0) scale(0.9,1)" font-size="12" fill="#000" text-anchor="middle">08:00</text>
<text transform="translate(691.7,787.0) scale(0.9,1)" font-size="12" fill="#000" text-anchor="middle">09:00</text>
<text transform="translate(747.5,787.0) scale(0.9,1)" font-size="12" fill="#000" text-anchor="middle">10:00</text>
<text transform="translate(803.3,787.0) scale(0.9,1)" font-size="12" fill="#000" text-anchor="middle">11:00</text>
<text transform="translate(859.1,787.0) scale(0.9,1)" font-size="12" fill="#000" text-anchor="middle">12:00</text>
<text transform="translate(914.9,787.0) scale(0.9,1)" font-size="12" fill="#000" text-anchor="middle">13:00</text>
<text transform="translate(970.7,787.0) scale(0.9,1)" font-size="12" fill="#000" text-anchor="middle">14:00</text>
<text transform="translate(1026.5,787.0) scale(0.9,1)" font-size="12" fill="#000" text-anchor="middle">15:00</text>
<text transform="translate(1082.3,787.0) scale(0.9,1)" font-size="12" fill="#000" text-anchor="middle">16:00</text>
<text transform="translate(1138.1,787.0) scale(0.9,1)" font-size="12" fill="#000" text-anchor="middle">17:00</text>
<text transform="translate(1193.9,787.0) scale(0.9,1)" font-size="12" fill="#000" text-anchor="middle">18:00</text>
<text transform="translate(1249.7,787.0) scale(0.9,1)" font-size="12" fill="#000" text-anchor="middle">19:00</text>
<text transform="translate(1305.5,787.0) scale(0.9,1)" font-size="12" fill="#000" text-anchor="middle">20:00</text>
<text transform="translate(1361.3,787.0) scale(0.9,1)" font-size="12" fill="#000" text-anchor="middle">21:00</text>
<text transform="translate(1417.1,787.0) scale(0.9,1)" font-size="12" fill="#000" text-anchor="middle">22:00</text>
<text transform="translate(1472.9,787.0) scale(0.9,1)" font-size="12" fill="#000" text-anchor="middle">23:00</text>
<text transform="translate(1528.7,787.0) scale(0.9,1)" font-size="12" fill="#000" text-anchor="middle">24:00</text>
<g shape-rendering="crispEdges">
<line x1="40.5" y1="48" x2="40.5" y2="769" stroke="#808080" stroke-width="1"/>
<line x1="36" y1="48.5" x2="41" y2="48.5" stroke="#808080" stroke-width="1"/>
<line x1="36" y1="72.5" x2="41" y2="72.5" stroke="#808080" stroke-width="1"/>
<line x1="36" y1="96.5" x2="41" y2="96.5" stroke="#808080" stroke-width="1"/>
<line x1="36" y1="120.5" x2="41" y2="120.5" stroke="#808080" stroke-width="1"/>
<line x1="36" y1="144.5" x2="41" y2="144.5" stroke="#808080" stroke-width="1"/>
<line x1="36" y1="168.5" x2="41" y2="168.5" stroke="#808080" stroke-width="1"/>
<line x1="36" y1="192.5" x2="41" y2="192.5" stroke="#808080" stroke-width="1"/>
<line x1="36" y1="216.5" x2="41" y2="216.5" stroke="#808080" stroke-width="1"/>
<line x1="36" y1="240.5" x2="41" y2="240.5" stroke="#808080" stroke-width="1"/>
<line x1="36" y1="264.5" x2="41" y2="264.5" stroke="#808080" stroke-width="1"/>
<line x1="36" y1="288.5" x2="41" y2="288.5" stroke="#808080" stroke-width="1"/>
<line x1="36" y1="312.5" x2="41" y2="312.5" stroke="#808080" stroke-width="1"/>
<line x1="36" y1="336.5" x2="41" y2="336.5" stroke="#808080" stroke-width="1"/>
<line x1="36" y1="360.5" x2="41" y2="360.5" stroke="#808080" stroke-width="1"/>
<line x1="36" y1="384.5" x2="41" y2="384.5" stroke="#808080" stroke-width="1"/>
<line x1="36" y1="408.5" x2="41" y2="408.5" stroke="#808080" stroke-width="1"/>
<line x1="36" y1="432.5" x2="41" y2="432.5" stroke="#808080" stroke-width="1"/>
<line x1="36" y1="456.5" x2="41" y2="456.5" stroke="#808080" stroke-width="1"/>
<line x1="36" y1="480.5" x2="41" y2="480.5" stroke="#808080" stroke-width="1"/>
<line x1="36" y1="504.5" x2="41" y2="504.5" stroke="#808080" stroke-width="1"/>
<line x1="36" y1="528.5" x2="41" y2="528.5" stroke="#808080" stroke-width="1"/>
<line x1="36" y1="552.5" x2="41" y2="552.5" stroke="#808080" stroke-width="1"/>
<line x1="36" y1="576.5" x2="41" y2="576.5" stroke="#808080" stroke-width="1"/>
<line x1="36" y1="600.5" x2="41" y2="600.5" stroke="#808080" stroke-width="1"/>
<line x1="36" y1="624.5" x2="41" y2="624.5" stroke="#808080" stroke-width="1"/>
<line x1="36" y1="648.5" x2="41" y2="648.5" stroke="#808080" stroke-width="1"/>
<line x1="36" y1="672.5" x2="41" y2="672.5" stroke="#808080" stroke-width="1"/>
<line x1="36" y1="696.5" x2="41" y2="696.5" stroke="#808080" stroke-width="1"/>
<line x1="36" y1="720.5" x2="41" y2="720.5" stroke="#808080" stroke-width="1"/>
<line x1="36" y1="744.5" x2="41" y2="744.5" stroke="#808080" stroke-width="1"/>
<line x1="36" y1="768.5" x2="41" y2="768.5" stroke="#808080" stroke-width="1"/>
<line x1="36" y1="48.5" x2="44" y2="48.5" stroke="#808080" stroke-width="1"/>
<line x1="36" y1="768.5" x2="44" y2="768.5" stroke="#808080" stroke-width="1"/>
</g>
<text transform="translate(34.5,53.0) scale(0.9,1)" font-size="12" fill="#ff0000" text-anchor="end">25.0</text>
<text transform="translate(34.5,77.0) scale(0.9,1)" font-size="12" fill="#ff0000" text-anchor="end">24.0</text>
<text transform="translate(34.5,101.0) scale(0.9,1)" font-size="12" fill="#ff0000" text-anchor="end">23.0</text>
<text transform="translate(34.5,125.0) scale(0.9,1)" font-size="12" fill="#ff0000" text-anchor="end">22.0</text>
<text transform="translate(34.5,149.0) scale(0.9,1)" font-size="12" fill="#ff0000" text-anchor="end">21.0</text>
<text transform="translate(34.5,173.0) scale(0.9,1)" font-size="12" fill="#ff0000" text-anchor="end">20.0</text>
<text transform="translate(34.5,197.0) scale(0.9,1)" font-size="12" fill="#ff0000" text-anchor="end">19.0</text>
<text transform="translate(34.5,221.0) scale(0.9,1)" font-size="12" fill="#ff0000" text-anchor="end">18.0</text>
<text transform="translate(34.5,245.0) scale(0.9,1)" font-size="12" fill="#ff0000" text-anchor="end">17.0</text>
<text transform="translate(34.5,269.0) scale(0.9,1)" font-size="12" fill="#ff0000" text-anchor="end">16.0</text>
<text transform="translate(34.5,293.0) scale(0.9,1)" font-size="12" fill="#ff0000" text-anchor="end">15.0</text>
<text transform="translate(34.5,317.0) scale(0.9,1)" font-size="12" fill="#ff0000" text-anchor="end">14.0</text>
<text transform="translate(34.5,341.0) scale(0.9,1)" font-size="12" fill="#ff0000" text-anchor="end">13.0</text>
<text transform="translate(34.5,365.0) scale(0.9,1)" font-size="12" fill="#ff0000" text-anchor="end">12.0</text>
<text transform="translate(34.5,389.0) scale(0.9,1)" font-size="12" fill="#ff0000" text-anchor="end">11.0</text>
<text transform="translate(34.5,413.0) scale(0.9,1)" font-size="12" fill="#ff0000" text-anchor="end">10.0</text>
<text transform="translate(34.5,437.0) scale(0.9,1)" font-size="12" fill="#ff0000" text-anchor="end">9.0</text>
<text transform="translate(34.5,461.0) scale(0.9,1)" font-size="12" fill="#ff0000" text-anchor="end">8.0</text>
<text transform="translate(34.5,485.0) scale(0.9,1)" font-size="12" fill="#ff0000" text-anchor="end">7.0</text>
<text transform="translate(34.5,509.0) scale(0.9,1)" font-size="12" fill="#ff0000" text-anchor="end">6.0</text>
<text transform="translate(34.5,533.0) scale(0.9,1)" font-size="12" fill="#ff0000" text-anchor="end">5.0</text>
<text transform="translate(34.5,557.0) scale(0.9,1)" font-size="12" fill="#ff0000" text-anchor="end">4.0</text>
<text transform="translate(34.5,581.0) scale(0.9,1)" font-size="12" fill="#ff0000" text-anchor="end">3.0</text>
<text transform="translate(34.5,605.0) scale(0.9,1)" font-size="12" fill="#ff0000" text-anchor="end">2.0</text>
<text transform="translate(34.5,629.0) scale(0.9,1)" font-size="12" fill="#ff0000" text-anchor="end">1.0</text>
<text transform="translate(34.5,653.0) scale(0.9,1)" font-size="12" fill="#ff0000" text-anchor="end">0.0</text>
<text transform="translate(34.5,677.0) scale(0.9,1)" font-size="12" fill="#ff0000" text-anchor="end">-1.0</text>
<text transform="translate(34.5,701.0) scale(0.9,1)" font-size="12" fill="#ff0000" text-anchor="end">-2.0</text>
<text transform="translate(34.5,725.0) scale(0.9,1)" font-size="12" fill="#ff0000" text-anchor="end">-3.0</text>
<text transform="translate(34.5,749.0) scale(0.9,1)" font-size="12" fill="#ff0000" text-anchor="end">-4.0</text>
<text transform="translate(34.5,773.0) scale(0.9,1)" font-size="12" fill="#ff0000" text-anchor="end">-5.0</text>
<g shape-rendering="crispEdges">
<line x1="77.5" y1="48" x2="77.5" y2="769" stroke="#808080" stroke-width="1"/>
<line x1="73" y1="768.5" x2="78" y2="768.5" stroke="#808080" stroke-width="1"/>
<line x1="73" y1="734.5" x2="78" y2="734.5" stroke="#808080" stroke-width="1"/>
<line x1="73" y1="699.5" x2="78" y2="699.5" stroke="#808080" stroke-width="1"/>
<line x1="73" y1="665.5" x2="78" y2="665.5" stroke="#808080" stroke-width="1"/>
<line x1="73" y1="631.5" x2="78" y2="631.5" stroke="#808080" stroke-width="1"/>
<line x1="73" y1="597.5" x2="78" y2="597.5" stroke="#808080" stroke-width="1"/>
<line x1="73" y1="562.5" x2="78" y2="562.5" stroke="#808080" stroke-width="1"/>
<line x1="73" y1="528.5" x2="78" y2="528.5" stroke="#808080" stroke-width="1"/>
<line x1="73" y1="494.5" x2="78" y2="494.5" stroke="#808080" stroke-width="1"/>
<line x1="73" y1="459.5" x2="78" y2="459.5" stroke="#808080" stroke-width="1"/>
<line x1="73" y1="425.5" x2="78" y2="425.5" stroke="#808080" stroke-width="1"/>
<line x1="73" y1="391.5" x2="78" y2="391.5" stroke="#808080" stroke-width="1"/>
<line x1="73" y1="357.5" x2="78" y2="357.5" stroke="#808080" stroke-width="1"/>
<line x1="73" y1="322.5" x2="78" y2="322.5" stroke="#808080" stroke-width="1"/>
<line x1="73" y1="288.5" x2="78" y2="288.5" stroke="#808080" stroke-width="1"/>
<line x1="73" y1="254.5" x2="78" y2="254.5" stroke="#808080" stroke-width="1"/>
<line x1="73" y1="219.5" x2="78" y2="219.5" stroke="#808080" stroke-width="1"/>
<line x1="73" y1="185.5" x2="78" y2="185.5" stroke="#808080" stroke-width="1"/>
<line x1="73" y1="151.5" x2="78" y2="151.5" stroke="#808080" stroke-width="1"/>
<line x1="73" y1="117.5" x2="78" y2="117.5" stroke="#808080" stroke-width="1"/>
<line x1="73" y1="82.5" x2="78" y2="82.5" stroke="#808080" stroke-width="1"/>
<line x1="73" y1="48.5" x2="78" y2="48.5" stroke="#808080" stroke-width="1"/>
<line x1="73" y1="48.5" x2="81" y2="48.5" stroke="#808080" stroke-width="1"/>
<line x1="73" y1="768.5" x2="81" y2="768.5" stroke="#808080" stroke-width="1"/>
</g>
<text transform="translate(71.5,773.0) scale(0.9,1)" font-size="12" fill="#000000" text-anchor="end">990</text>
<text transform="translate(71.5,739.0) scale(0.9,1)" font-size="12" fill="#000000" text-anchor="end">992</text>
<text transform="translate(71.5,704.0) scale(0.9,1)" font-size="12" fill="#000000" text-anchor="end">994</text>
<text transform="translate(71.5,670.0) scale(0.9,1)" font-size="12" fill="#000000" text-anchor="end">996</text>
<text transform="translate(71.5,636.0) scale(0.9,1)" font-size="12" fill="#000000" text-anchor="end">998</text>
<text transform="translate(71.5,602.0) scale(0.9,1)" font-size="12" fill="#000000" text-anchor="end">1000</text>
<text transform="translate(71.5,567.0) scale(0.9,1)" font-size="12" fill="#000000" text-anchor="end">1002</text>
<text transform="translate(71.5,533.0) scale(0.9,1)" font-size="12" fill="#000000" text-anchor="end">1004</text>
<text transform="translate(71.5,499.0) scale(0.9,1)" font-size="12" fill="#000000" text-anchor="end">1006</text>
<text transform="translate(71.5,464.0) scale(0.9,1)" font-size="12" fill="#000000" text-anchor="end">1008</text>
<text transform="translate(71.5,430.0) scale(0.9,1)" font-size="12" fill="#000000" text-anchor="end">1010</text>
<text transform="translate(71.5,396.0) scale(0.9,1)" font-size="12" fill="#000000" text-anchor="end">1012</text>
<text transform="translate(71.5,362.0) scale(0.9,1)" font-size="12" fill="#000000" text-anchor="end">1014</text>
<text transform="translate(71.5,327.0) scale(0.9,1)" font-size="12" fill="#000000" text-anchor="end">1016</text>
<text transform="translate(71.5,293.0) scale(0.9,1)" font-size="12" fill="#000000" text-anchor="end">1018</text>
<text transform="translate(71.5,259.0) scale(0.9,1)" font-size="12" fill="#000000" text-anchor="end">1020</text>
<text transform="translate(71.5,224.0) scale(0.9,1)" font-size="12" fill="#000000" text-anchor="end">1022</text>
<text transform="translate(71.5,190.0) scale(0.9,1)" font-size="12" fill="#000000" text-anchor="end">1024</text>
<text transform="translate(71.5,156.0) scale(0.9,1)" font-size="12" fill="#000000" text-anchor="end">1026</text>
<text transform="translate(71.5,122.0) scale(0.9,1)" font-size="12" fill="#000000" text-anchor="end">1028</text>
<text transform="translate(71.5,87.0) scale(0.9,1)" font-size="12" fill="#000000" text-anchor="end">1030</text>
<text transform="translate(71.5,53.0) scale(0.9,1)" font-size="12" fill="#000000" text-anchor="end">1032</text>
<g shape-rendering="crispEdges">
<line x1="114.5" y1="48" x2="114.5" y2="769" stroke="#808080" stroke-width="1"/>
<line x1="110" y1="768.5" x2="115" y2="768.5" stroke="#808080" stroke-width="1"/>
<line x1="110" y1="744.5" x2="115" y2="744.5" stroke="#808080" stroke-width="1"/>
<line x1="110" y1="720.5" x2="115" y2="720.5" stroke="#808080" stroke-width="1"/>
<line x1="110" y1="696.5" x2="115" y2="696.5" stroke="#808080" stroke-width="1"/>
<line x1="110" y1="672.5" x2="115" y2="672.5" stroke="#808080" stroke-width="1"/>
<line x1="110" y1="648.5" x2="115" y2="648.5" stroke="#808080" stroke-width="1"/>
<line x1="110" y1="624.5" x2="115" y2="624.5" stroke="#808080" stroke-width="1"/>
<line x1="110" y1="600.5" x2="115" y2="600.5" stroke="#808080" stroke-width="1"/>
<line x1="110" y1="576.5" x2="115" y2="576.5" stroke="#808080" stroke-width="1"/>
<line x1="110" y1="552.5" x2="115" y2="552.5" stroke="#808080" stroke-width="1"/>
<line x1="110" y1="528.5" x2="115" y2="528.5" stroke="#808080" stroke-width="1"/>
<line x1="110" y1="504.5" x2="115" y2="504.5" stroke="#808080" stroke-width="1"/>
<line x1="110" y1="480.5" x2="115" y2="480.5" stroke="#808080" stroke-width="1"/>
<line x1="110" y1="456.5" x2="115" y2="456.5" stroke="#808080" stroke-width="1"/>
<line x1="110" y1="432.5" x2="115" y2="432.5" stroke="#808080" stroke-width="1"/>
<line x1="110" y1="408.5" x2="115" y2="408.5" stroke="#808080" stroke-width="1"/>
<line x1="110" y1="384.5" x2="115" y2="384.5" stroke="#808080" stroke-width="1"/>
<line x1="110" y1="360.5" x2="115" y2="360.5" stroke="#808080" stroke-width="1"/>
<line x1="110" y1="336.5" x2="115" y2="336.5" stroke="#808080" stroke-width="1"/>
<line x1="110" y1="312.5" x2="115" y2="312.5" stroke="#808080" stroke-width="1"/>
<line x1="110" y1="288.5" x2="115" y2="288.5" stroke="#808080" stroke-width="1"/>
<line x1="110" y1="264.5" x2="115" y2="264.5" stroke="#808080" stroke-width="1"/>
<line x1="110" y1="240.5" x2="115" y2="240.5" stroke="#808080" stroke-width="1"/>
<line x1="110" y1="216.5" x2="115" y2="216.5" stroke="#808080" stroke-width="1"/>
<line x1="110" y1="192.5" x2="115" y2="192.5" stroke="#808080" stroke-width="1"/>
<line x1="110" y1="168.5" x2="115" y2="168.5" stroke="#808080" stroke-width="1"/>
<line x1="110" y1="144.5" x2="115" y2="144.5" stroke="#808080" stroke-width="1"/>
<line x1="110" y1="120.5" x2="115" y2="120.5" stroke="#808080" stroke-width="1"/>
<line x1="110" y1="96.5" x2="115" y2="96.5" stroke="#808080" stroke-width="1"/>
<line x1="110" y1="72.5" x2="115" y2="72.5" stroke="#808080" stroke-width="1"/>
<line x1="110" y1="48.5" x2="115" y2="48.5" stroke="#808080" stroke-width="1"/>
<line x1="110" y1="48.5" x2="118" y2="48.5" stroke="#808080" stroke-width="1"/>
<line x1="110" y1="768.5" x2="118" y2="768.5" stroke="#808080" stroke-width="1"/>
</g>
<text transform="translate(108.5,773.0) scale(0.9,1)" font-size="12" fill="#008000" text-anchor="end">0.0</text>
<text transform="translate(108.5,749.0) scale(0.9,1)" font-size="12" fill="#008000" text-anchor="end">2.0</text>
<text transform="translate(108.5,725.0) scale(0.9,1)" font-size="12" fill="#008000" text-anchor="end">4.0</text>
<text transform="translate(108.5,701.0) scale(0.9,1)" font-size="12" fill="#008000" text-anchor="end">6.0</text>
<text transform="translate(108.5,677.0) scale(0.9,1)" font-size="12" fill="#008000" text-anchor="end">8.0</text>
<text transform="translate(108.5,653.0) scale(0.9,1)" font-size="12" fill="#008000" text-anchor="end">10.0</text>
<text transform="translate(108.5,629.0) scale(0.9,1)" font-size="12" fill="#008000" text-anchor="end">12.0</text>
<text transform="translate(108.5,605.0) scale(0.9,1)" font-size="12" fill="#008000" text-anchor="end">14.0</text>
<text transform="translate(108.5,581.0) scale(0.9,1)" font-size="12" fill="#008000" text-anchor="end">16.0</text>
<text transform="translate(108.5,557.0) scale(0.9,1)" font-size="12" fill="#008000" text-anchor="end">18.0</text>
<text transform="translate(108.5,533.0) scale(0.9,1)" font-size="12" fill="#008000" text-anchor="end">20.0</text>
<text transform="translate(108.5,509.0) scale(0.9,1)" font-size="12" fill="#008000" text-anchor="end">22.0</text>
<text transform="translate(108.5,485.0) scale(0.9,1)" font-size="12" fill="#008000" text-anchor="end">24.0</text>
<text transform="translate(108.5,461.0) scale(0.9,1)" font-size="12" fill="#008000" text-anchor="end">26.0</text>
<text transform="translate(108.5,437.0) scale(0.9,1)" font-size="12" fill="#008000" text-anchor="end">28.0</text>
<text transform="translate(108.5,413.0) scale(0.9,1)" font-size="12" fill="#008000" text-anchor="end">30.0</text>
<text transform="translate(108.5,389.0) scale(0.9,1)" font-size="12" fill="#008000" text-anchor="end">32.0</text>
<text transform="translate(108.5,365.0) scale(0.9,1)" font-size="12" fill="#008000" text-anchor="end">34.0</text>
<text transform="translate(108.5,341.0) scale(0.9,1)" font-size="12" fill="#008000" text-anchor="end">36.0</text>
<text transform="translate(108.5,317.0) scale(0.9,1)" font-size="12" fill="#008000" text-anchor="end">38.0</text>
<text transform="translate(108.5,293.0) scale(0.9,1)" font-size="12" fill="#008000" text-anchor="end">40.0</text>
<text transform="translate(108.5,269.0) scale(0.9,1)" font-size="12" fill="#008000" text-anchor="end">42.0</text>
<text transform="translate(108.5,245.0) scale(0.9,1)" font-size="12" fill="#008000" text-anchor="end">44.0</text>
<text transform="translate(108.5,221.0) scale(0.9,1)" font-size="12" fill="#008000" text-anchor="end">46.0</text>
<text transform="translate(108.5,197.0) scale(0.9,1)" font-size="12" fill="#008000" text-anchor="end">48.0</text>
<text transform="translate(108.5,173.0) scale(0.9,1)" font-size="12" fill="#008000" text-anchor="end">50.0</text>
<text transform="translate(108.5,149.0) scale(0.9,1)" font-size="12" fill="#008000" text-anchor="end">52.0</text>
<text transform="translate(108.5,125.0) scale(0.9,1)" font-size="12" fill="#008000" text-anchor="end">54.0</text>
<text transform="translate(108.5,101.0) scale(0.9,1)" font-size="12" fill="#008000" text-anchor="end">56.0</text>
<text transform="translate(108.5,77.0) scale(0.9,1)" font-size="12" fill="#008000" text-anchor="end">58.0</text>
<text transform="translate(108.5,53.0) scale(0.9,1)" font-size="12" fill="#008000" text-anchor="end">60.0</text>
<g shape-rendering="crispEdges">
<line x1="151.5" y1="48" x2="151.5" y2="769" stroke="#808080" stroke-width="1"/>
<line x1="147" y1="768.5" x2="152" y2="768.5" stroke="#808080" stroke-width="1"/>
<line x1="147" y1="648.5" x2="152" y2="648.5" stroke="#808080" stroke-width="1"/>
<line x1="147" y1="528.5" x2="152" y2="528.5" stroke="#808080" stroke-width="1"/>
<line x1="147" y1="408.5" x2="152" y2="408.5" stroke="#808080" stroke-width="1"/>
<line x1="147" y1="288.5" x2="152" y2="288.5" stroke="#808080" stroke-width="1"/>
<line x1="147" y1="168.5" x2="152" y2="168.5" stroke="#808080" stroke-width="1"/>
<line x1="147" y1="48.5" x2="152" y2="48.5" stroke="#808080" stroke-width="1"/>
<line x1="147" y1="48.5" x2="155" y2="48.5" stroke="#808080" stroke-width="1"/>
<line x1="147" y1="768.5" x2="155" y2="768.5" stroke="#808080" stroke-width="1"/>
</g>
<text transform="translate(145.5,773.0) scale(0.9,1)" font-size="12" fill="#d0d000" text-anchor="end">0</text>
<text transform="translate(145.5,653.0) scale(0.9,1)" font-size="12" fill="#d0d000" text-anchor="end">5</text>
<text transform="translate(145.5,533.0) scale(0.9,1)" font-size="12" fill="#d0d000" text-anchor="end">10</text>
<text transform="translate(145.5,413.0) scale(0.9,1)" font-size="12" fill="#d0d000" text-anchor="end">15</text>
<text transform="translate(145.5,293.0) scale(0.9,1)" font-size="12" fill="#d0d000" text-anchor="end">20</text>
<text transform="translate(145.5,173.0) scale(0.9,1)" font-size="12" fill="#d0d000" text-anchor="end">25</text>
<text transform="translate(145.5,53.0) scale(0.9,1)" font-size="12" fill="#d0d000" text-anchor="end">30</text>
<g shape-rendering="crispEdges">
<line x1="184" y1="768.5" x2="188" y2="768.5" stroke="#808080" stroke-width="1"/>
<line x1="184" y1="688.5" x2="188" y2="688.5" stroke="#808080" stroke-width="1"/>
<line x1="184" y1="608.5" x2="188" y2="608.5" stroke="#808080" stroke-width="1"/>
<line x1="184" y1="528.5" x2="188" y2="528.5" stroke="#808080" stroke-width="1"/>
<line x1="184" y1="448.5" x2="188" y2="448.5" stroke="#808080" stroke-width="1"/>
<line x1="184" y1="368.5" x2="188" y2="368.5" stroke="#808080" stroke-width="1"/>
<line x1="184" y1="288.5" x2="188" y2="288.5" stroke="#808080" stroke-width="1"/>
<line x1="184" y1="208.5" x2="188" y2="208.5" stroke="#808080" stroke-width="1"/>
<line x1="184" y1="128.5" x2="188" y2="128.5" stroke="#808080" stroke-width="1"/>
<line x1="184" y1="48.5" x2="188" y2="48.5" stroke="#808080" stroke-width="1"/>
</g>
<text transform="translate(182.0,773.0) scale(0.9,1)" font-size="12" fill="#e0e040" text-anchor="end">0</text>
<text transform="translate(182.0,693.0) scale(0.9,1)" font-size="12" fill="#e0e040" text-anchor="end">100</text>
<text transform="translate(182.0,613.0) scale(0.9,1)" font-size="12" fill="#e0e040" text-anchor="end">200</text>
<text transform="translate(182.0,533.0) scale(0.9,1)" font-size="12" fill="#e0e040" text-anchor="end">300</text>
<text transform="translate(182.0,453.0) scale(0.9,1)" font-size="12" fill="#e0e040" text-anchor="end">400</text>
<text transform="translate(182.0,373.0) scale(0.9,1)" font-size="12" fill="#e0e040" text-anchor="end">500</text>
<text transform="translate(182.0,293.0) scale(0.9,1)" font-size="12" fill="#e0e040" text-anchor="end">600</text>
<text transform="translate(182.0,213.0) scale(0.9,1)" font-size="12" fill="#e0e040" text-anchor="end">700</text>
<text transform="translate(182.0,133.0) scale(0.9,1)" font-size="12" fill="#e0e040" text-anchor="end">800</text>
<text transform="translate(182.0,53.0) scale(0.9,1)" font-size="12" fill="#e0e040" text-anchor="end">900</text>
<text transform="translate(20.0,37.0) scale(0.9,1)" font-size="12" fill="#ff0000" text-anchor="start">°C</text>
<text transform="translate(48.0,37.0) scale(0.9,1)" font-size="12" fill="#000" text-anchor="start">hPa</text>
<text transform="translate(79.0,37.0) scale(0.9,1)" font-size="12" fill="#008000" text-anchor="start">km/h</text>
<text transform="translate(125.0,37.0) scale(0.9,1)" font-size="12" fill="#d0d000" text-anchor="start">min</text>
<text transform="translate(151.0,37.0) scale(0.9,1)" font-size="12" fill="#e0e040" text-anchor="start">W/m²</text>
<g shape-rendering="crispEdges">
<line x1="1528" y1="768.5" x2="1533" y2="768.5" stroke="#808080" stroke-width="1"/>
<line x1="1528" y1="732.5" x2="1533" y2="732.5" stroke="#808080" stroke-width="1"/>
<line x1="1528" y1="696.5" x2="1533" y2="696.5" stroke="#808080" stroke-width="1"/>
<line x1="1528" y1="660.5" x2="1533" y2="660.5" stroke="#808080" stroke-width="1"/>
<line x1="1528" y1="624.5" x2="1533" y2="624.5" stroke="#808080" stroke-width="1"/>
<line x1="1528" y1="588.5" x2="1533" y2="588.5" stroke="#808080" stroke-width="1"/>
<line x1="1528" y1="552.5" x2="1533" y2="552.5" stroke="#808080" stroke-width="1"/>
<line x1="1528" y1="516.5" x2="1533" y2="516.5" stroke="#808080" stroke-width="1"/>
<line x1="1528" y1="480.5" x2="1533" y2="480.5" stroke="#808080" stroke-width="1"/>
<line x1="1528" y1="444.5" x2="1533" y2="444.5" stroke="#808080" stroke-width="1"/>
<line x1="1528" y1="408.5" x2="1533" y2="408.5" stroke="#808080" stroke-width="1"/>
<line x1="1528" y1="372.5" x2="1533" y2="372.5" stroke="#808080" stroke-width="1"/>
<line x1="1528" y1="336.5" x2="1533" y2="336.5" stroke="#808080" stroke-width="1"/>
<line x1="1528" y1="300.5" x2="1533" y2="300.5" stroke="#808080" stroke-width="1"/>
<line x1="1528" y1="264.5" x2="1533" y2="264.5" stroke="#808080" stroke-width="1"/>
<line x1="1528" y1="228.5" x2="1533" y2="228.5" stroke="#808080" stroke-width="1"/>
<line x1="1528" y1="192.5" x2="1533" y2="192.5" stroke="#808080" stroke-width="1"/>
<line x1="1528" y1="156.5" x2="1533" y2="156.5" stroke="#808080" stroke-width="1"/>
<line x1="1528" y1="120.5" x2="1533" y2="120.5" stroke="#808080" stroke-width="1"/>
<line x1="1528" y1="84.5" x2="1533" y2="84.5" stroke="#808080" stroke-width="1"/>
<line x1="1528" y1="48.5" x2="1533" y2="48.5" stroke="#808080" stroke-width="1"/>
</g>
<text transform="translate(1534.5,773.0) scale(0.9,1)" font-size="12" fill="#808080" text-anchor="start">0</text>
<text transform="translate(1534.5,737.0) scale(0.9,1)" font-size="12" fill="#808080" text-anchor="start">5</text>
<text transform="translate(1534.5,701.0) scale(0.9,1)" font-size="12" fill="#808080" text-anchor="start">10</text>
<text transform="translate(1534.5,665.0) scale(0.9,1)" font-size="12" fill="#808080" text-anchor="start">15</text>
<text transform="translate(1534.5,629.0) scale(0.9,1)" font-size="12" fill="#808080" text-anchor="start">20</text>
<text transform="translate(1534.5,593.0) scale(0.9,1)" font-size="12" fill="#808080" text-anchor="start">25</text>
<text transform="translate(1534.5,557.0) scale(0.9,1)" font-size="12" fill="#808080" text-anchor="start">30</text>
<text transform="translate(1534.5,521.0) scale(0.9,1)" font-size="12" fill="#808080" text-anchor="start">35</text>
<text transform="translate(1534.5,485.0) scale(0.9,1)" font-size="12" fill="#808080" text-anchor="start">40</text>
<text transform="translate(1534.5,449.0) scale(0.9,1)" font-size="12" fill="#808080" text-anchor="start">45</text>
<text transform="translate(1534.5,413.0) scale(0.9,1)" font-size="12" fill="#808080" text-anchor="start">50</text>
<text transform="translate(1534.5,377.0) scale(0.9,1)" font-size="12" fill="#808080" text-anchor="start">55</text>
<text transform="translate(1534.5,341.0) scale(0.9,1)" font-size="12" fill="#808080" text-anchor="start">60</text>
<text transform="translate(1534.5,305.0) scale(0.9,1)" font-size="12" fill="#808080" text-anchor="start">65</text>
<text transform="translate(1534.5,269.0) scale(0.9,1)" font-size="12" fill="#808080" text-anchor="start">70</text>
<text transform="translate(1534.5,233.0) scale(0.9,1)" font-size="12" fill="#808080" text-anchor="start">75</text>
<text transform="translate(1534.5,197.0) scale(0.9,1)" font-size="12" fill="#808080" text-anchor="start">80</text>
<text transform="translate(1534.5,161.0) scale(0.9,1)" font-size="12" fill="#808080" text-anchor="start">85</text>
<text transform="translate(1534.5,125.0) scale(0.9,1)" font-size="12" fill="#808080" text-anchor="start">90</text>
<text transform="translate(1534.5,89.0) scale(0.9,1)" font-size="12" fill="#808080" text-anchor="start">95</text>
<text transform="translate(1534.5,53.0) scale(0.9,1)" font-size="12" fill="#808080" text-anchor="start">100</text>
<g shape-rendering="crispEdges">
<line x1="1565.5" y1="48" x2="1565.5" y2="769" stroke="#808080" stroke-width="1"/>
<line x1="1565" y1="768.5" x2="1570" y2="768.5" stroke="#808080" stroke-width="1"/>
<line x1="1565" y1="739.5" x2="1570" y2="739.5" stroke="#808080" stroke-width="1"/>
<line x1="1565" y1="710.5" x2="1570" y2="710.5" stroke="#808080" stroke-width="1"/>
<line x1="1565" y1="682.5" x2="1570" y2="682.5" stroke="#808080" stroke-width="1"/>
<line x1="1565" y1="653.5" x2="1570" y2="653.5" stroke="#808080" stroke-width="1"/>
<line x1="1565" y1="624.5" x2="1570" y2="624.5" stroke="#808080" stroke-width="1"/>
<line x1="1565" y1="595.5" x2="1570" y2="595.5" stroke="#808080" stroke-width="1"/>
<line x1="1565" y1="566.5" x2="1570" y2="566.5" stroke="#808080" stroke-width="1"/>
<line x1="1565" y1="538.5" x2="1570" y2="538.5" stroke="#808080" stroke-width="1"/>
<line x1="1565" y1="509.5" x2="1570" y2="509.5" stroke="#808080" stroke-width="1"/>
<line x1="1565" y1="480.5" x2="1570" y2="480.5" stroke="#808080" stroke-width="1"/>
<line x1="1565" y1="451.5" x2="1570" y2="451.5" stroke="#808080" stroke-width="1"/>
<line x1="1565" y1="422.5" x2="1570" y2="422.5" stroke="#808080" stroke-width="1"/>
<line x1="1565" y1="394.5" x2="1570" y2="394.5" stroke="#808080" stroke-width="1"/>
<line x1="1565" y1="365.5" x2="1570" y2="365.5" stroke="#808080" stroke-width="1"/>
<line x1="1565" y1="336.5" x2="1570" y2="336.5" stroke="#808080" stroke-width="1"/>
<line x1="1565" y1="307.5" x2="1570" y2="307.5" stroke="#808080" stroke-width="1"/>
<line x1="1565" y1="278.5" x2="1570" y2="278.5" stroke="#808080" stroke-width="1"/>
<line x1="1565" y1="250.5" x2="1570" y2="250.5" stroke="#808080" stroke-width="1"/>
<line x1="1565" y1="221.5" x2="1570" y2="221.5" stroke="#808080" stroke-width="1"/>
<line x1="1565" y1="192.5" x2="1570" y2="192.5" stroke="#808080" stroke-width="1"/>
<line x1="1565" y1="163.5" x2="1570" y2="163.5" stroke="#808080" stroke-width="1"/>
<line x1="1565" y1="134.5" x2="1570" y2="134.5" stroke="#808080" stroke-width="1"/>
<line x1="1565" y1="106.5" x2="1570" y2="106.5" stroke="#808080" stroke-width="1"/>
<line x1="1565" y1="77.5" x2="1570" y2="77.5" stroke="#808080" stroke-width="1"/>
</g>
<text transform="translate(1571.5,773.0) scale(0.9,1)" font-size="12" fill="#0000ff" text-anchor="start">0.0</text>
<text transform="translate(1571.5,744.0) scale(0.9,1)" font-size="12" fill="#0000ff" text-anchor="start">0.2</text>
<text transform="translate(1571.5,715.0) scale(0.9,1)" font-size="12" fill="#0000ff" text-anchor="start">0.4</text>
<text transform="translate(1571.5,687.0) scale(0.9,1)" font-size="12" fill="#0000ff" text-anchor="start">0.6</text>
<text transform="translate(1571.5,658.0) scale(0.9,1)" font-size="12" fill="#0000ff" text-anchor="start">0.8</text>
<text transform="translate(1571.5,629.0) scale(0.9,1)" font-size="12" fill="#0000ff" text-anchor="start">1.0</text>
<text transform="translate(1571.5,600.0) scale(0.9,1)" font-size="12" fill="#0000ff" text-anchor="start">1.2</text>
<text transform="translate(1571.5,571.0) scale(0.9,1)" font-size="12" fill="#0000ff" text-anchor="start">1.4</text>
<text transform="translate(1571.5,543.0) scale(0.9,1)" font-size="12" fill="#0000ff" text-anchor="start">1.6</text>
<text transform="translate(1571.5,514.0) scale(0.9,1)" font-size="12" fill="#0000ff" text-anchor="start">1.8</text>
<text transform="translate(1571.5,485.0) scale(0.9,1)" font-size="12" fill="#0000ff" text-anchor="start">2.0</text>
<text transform="translate(1571.5,456.0) scale(0.9,1)" font-size="12" fill="#0000ff" text-anchor="start">2.2</text>
<text transform="translate(1571.5,427.0) scale(0.9,1)" font-size="12" fill="#0000ff" text-anchor="start">2.4</text>
<text transform="translate(1571.5,399.0) scale(0.9,1)" font-size="12" fill="#0000ff" text-anchor="start">2.6</text>
<text transform="translate(1571.5,370.0) scale(0.9,1)" font-size="12" fill="#0000ff" text-anchor="start">2.8</text>
<text transform="translate(1571.5,341.0) scale(0.9,1)" font-size="12" fill="#0000ff" text-anchor="start">3.0</text>
<text transform="translate(1571.5,312.0) scale(0.9,1)" font-size="12" fill="#0000ff" text-anchor="start">3.2</text>
<text transform="translate(1571.5,283.0) scale(0.9,1)" font-size="12" fill="#0000ff" text-anchor="start">3.4</text>
<text transform="translate(1571.5,255.0) scale(0.9,1)" font-size="12" fill="#0000ff" text-anchor="start">3.6</text>
<text transform="translate(1571.5,226.0) scale(0.9,1)" font-size="12" fill="#0000ff" text-anchor="start">3.8</text>
<text transform="translate(1571.5,197.0) scale(0.9,1)" font-size="12" fill="#0000ff" text-anchor="start">4.0</text>
<text transform="translate(1571.5,168.0) scale(0.9,1)" font-size="12" fill="#0000ff" text-anchor="start">4.2</text>
<text transform="translate(1571.5,139.0) scale(0.9,1)" font-size="12" fill="#0000ff" text-anchor="start">4.4</text>
<text transform="translate(1571.5,111.0) scale(0.9,1)" font-size="12" fill="#0000ff" text-anchor="start">4.6</text>
<text transform="translate(1571.5,82.0) scale(0.9,1)" font-size="12" fill="#0000ff" text-anchor="start">4.8</text>
<g shape-rendering="crispEdges">
<line x1="1561" y1="768.5" x2="1570" y2="768.5" stroke="#808080" stroke-width="1"/>
<line x1="1561" y1="77.5" x2="1570" y2="77.5" stroke="#808080" stroke-width="1"/>
</g>
<g shape-rendering="crispEdges">
<line x1="1602.5" y1="48" x2="1602.5" y2="769" stroke="#808080" stroke-width="1"/>
<line x1="1602" y1="768.5" x2="1607" y2="768.5" stroke="#808080" stroke-width="1"/>
<line x1="1602" y1="708.5" x2="1607" y2="708.5" stroke="#808080" stroke-width="1"/>
<line x1="1602" y1="648.5" x2="1607" y2="648.5" stroke="#808080" stroke-width="1"/>
<line x1="1602" y1="588.5" x2="1607" y2="588.5" stroke="#808080" stroke-width="1"/>
<line x1="1602" y1="528.5" x2="1607" y2="528.5" stroke="#808080" stroke-width="1"/>
<line x1="1602" y1="468.5" x2="1607" y2="468.5" stroke="#808080" stroke-width="1"/>
<line x1="1602" y1="408.5" x2="1607" y2="408.5" stroke="#808080" stroke-width="1"/>
<line x1="1602" y1="348.5" x2="1607" y2="348.5" stroke="#808080" stroke-width="1"/>
<line x1="1602" y1="288.5" x2="1607" y2="288.5" stroke="#808080" stroke-width="1"/>
<line x1="1602" y1="228.5" x2="1607" y2="228.5" stroke="#808080" stroke-width="1"/>
<line x1="1602" y1="168.5" x2="1607" y2="168.5" stroke="#808080" stroke-width="1"/>
<line x1="1602" y1="108.5" x2="1607" y2="108.5" stroke="#808080" stroke-width="1"/>
<line x1="1602" y1="48.5" x2="1607" y2="48.5" stroke="#808080" stroke-width="1"/>
<line x1="1598" y1="48.5" x2="1606" y2="48.5" stroke="#808080" stroke-width="1"/>
<line x1="1598" y1="768.5" x2="1606" y2="768.5" stroke="#808080" stroke-width="1"/>
</g>
<text transform="translate(1608.5,773.0) scale(0.9,1)" font-size="12" fill="#408080" text-anchor="start">0</text>
<text transform="translate(1608.5,713.0) scale(0.9,1)" font-size="12" fill="#408080" text-anchor="start">30</text>
<text transform="translate(1608.5,653.0) scale(0.9,1)" font-size="12" fill="#408080" text-anchor="start">60</text>
<text transform="translate(1608.5,593.0) scale(0.9,1)" font-size="12" fill="#408080" text-anchor="start">90 O</text>
<text transform="translate(1608.5,533.0) scale(0.9,1)" font-size="12" fill="#408080" text-anchor="start">120</text>
<text transform="translate(1608.5,473.0) scale(0.9,1)" font-size="12" fill="#408080" text-anchor="start">150</text>
<text transform="translate(1608.5,413.0) scale(0.9,1)" font-size="12" fill="#408080" text-anchor="start">180 S</text>
<text transform="translate(1608.5,353.0) scale(0.9,1)" font-size="12" fill="#408080" text-anchor="start">210</text>
<text transform="translate(1608.5,293.0) scale(0.9,1)" font-size="12" fill="#408080" text-anchor="start">240</text>
<text transform="translate(1608.5,233.0) scale(0.9,1)" font-size="12" fill="#408080" text-anchor="start">270 W</text>
<text transform="translate(1608.5,173.0) scale(0.9,1)" font-size="12" fill="#408080" text-anchor="start">300</text>
<text transform="translate(1608.5,113.0) scale(0.9,1)" font-size="12" fill="#408080" text-anchor="start">330</text>
<text transform="translate(1608.5,53.0) scale(0.9,1)" font-size="12" fill="#408080" text-anchor="start">360 N</text>
<text transform="translate(1626.0,773.0) scale(0.9,1)" font-size="12" fill="#408080" text-anchor="start">N</text>
<g shape-rendering="crispEdges">
<line x1="1639.5" y1="48" x2="1639.5" y2="769" stroke="#808080" stroke-width="1"/>
<line x1="1639" y1="768.5" x2="1644" y2="768.5" stroke="#808080" stroke-width="1"/>
<line x1="1639" y1="696.5" x2="1644" y2="696.5" stroke="#808080" stroke-width="1"/>
<line x1="1639" y1="624.5" x2="1644" y2="624.5" stroke="#808080" stroke-width="1"/>
<line x1="1639" y1="552.5" x2="1644" y2="552.5" stroke="#808080" stroke-width="1"/>
<line x1="1639" y1="480.5" x2="1644" y2="480.5" stroke="#808080" stroke-width="1"/>
<line x1="1639" y1="408.5" x2="1644" y2="408.5" stroke="#808080" stroke-width="1"/>
<line x1="1639" y1="336.5" x2="1644" y2="336.5" stroke="#808080" stroke-width="1"/>
<line x1="1639" y1="264.5" x2="1644" y2="264.5" stroke="#808080" stroke-width="1"/>
<line x1="1639" y1="192.5" x2="1644" y2="192.5" stroke="#808080" stroke-width="1"/>
<line x1="1639" y1="120.5" x2="1644" y2="120.5" stroke="#808080" stroke-width="1"/>
<line x1="1639" y1="48.5" x2="1644" y2="48.5" stroke="#808080" stroke-width="1"/>
<line x1="1635" y1="48.5" x2="1643" y2="48.5" stroke="#808080" stroke-width="1"/>
<line x1="1635" y1="768.5" x2="1643" y2="768.5" stroke="#808080" stroke-width="1"/>
</g>
<text transform="translate(1645.5,773.0) scale(0.9,1)" font-size="12" fill="#a01010" text-anchor="start">0.0</text>
<text transform="translate(1645.5,701.0) scale(0.9,1)" font-size="12" fill="#a01010" text-anchor="start">1.0</text>
<text transform="translate(1645.5,629.0) scale(0.9,1)" font-size="12" fill="#a01010" text-anchor="start">2.0</text>
<text transform="translate(1645.5,557.0) scale(0.9,1)" font-size="12" fill="#a01010" text-anchor="start">3.0</text>
<text transform="translate(1645.5,485.0) scale(0.9,1)" font-size="12" fill="#a01010" text-anchor="start">4.0</text>
<text transform="translate(1645.5,413.0) scale(0.9,1)" font-size="12" fill="#a01010" text-anchor="start">5.0</text>
<text transform="translate(1645.5,341.0) scale(0.9,1)" font-size="12" fill="#a01010" text-anchor="start">6.0</text>
<text transform="translate(1645.5,269.0) scale(0.9,1)" font-size="12" fill="#a01010" text-anchor="start">7.0</text>
<text transform="translate(1645.5,197.0) scale(0.9,1)" font-size="12" fill="#a01010" text-anchor="start">8.0</text>
<text transform="translate(1645.5,125.0) scale(0.9,1)" font-size="12" fill="#a01010" text-anchor="start">9.0</text>
<text transform="translate(1645.5,53.0) scale(0.9,1)" font-size="12" fill="#a01010" text-anchor="start">10.0</text>
<text transform="translate(1529.0,37.0) scale(0.9,1)" font-size="12" fill="#808080" text-anchor="start">%</text>
<text transform="translate(1566.0,37.0) scale(0.9,1)" font-size="12" fill="#0000ff" text-anchor="start">l/m²</text>
<text transform="translate(1603.0,37.0) scale(0.9,1)" font-size="12" fill="#408080" text-anchor="start">°</text>
<text transform="translate(1640.0,37.0) scale(0.9,1)" font-size="12" fill="#a01010" text-anchor="start">UV-I</text>
<g shape-rendering="crispEdges">
<rect x="537.0" y="764.0" width="2.0" height="13.0" fill="#808080"/>
<rect x="565.0" y="764.0" width="2.0" height="13.0" fill="#ffff00"/>
<rect x="1270.0" y="770.0" width="2.0" height="7.0" fill="#808080"/>
<rect x="1289.0" y="764.0" width="2.0" height="13.0" fill="#ffff00"/>
</g>
<text transform="translate(11.0,798.0) scale(0.9,1)" font-size="12" fill="#000" text-anchor="start">12:58</text>
<path d="M40 797 L40 794 Q44.5 788 49 794 L49 797 Z" fill="#ffff00"/>
<text transform="translate(533.0,798.0) scale(0.9,1)" font-size="12" fill="#000" text-anchor="start">06:46</text>
<circle cx="566.5" cy="793" r="3" fill="#ffff00"/><g stroke="#ffff60" stroke-width="1"><line x1="562" y1="788.5" x2="571" y2="797.5"/><line x1="571" y1="788.5" x2="562" y2="797.5"/><line x1="566.5" y1="787" x2="566.5" y2="799"/><line x1="560.5" y1="793" x2="572.5" y2="793"/></g>
<text transform="translate(1256.3,798.0) scale(0.9,1)" font-size="12" fill="#000" text-anchor="start">19:44</text>
<text transform="translate(1293.0,798.0) scale(0.9,1)" font-size="12" fill="#000" text-anchor="start">24</text>
<rect x="1286.0" y="788.0" width="9.5" height="11.0" fill="#ffffff"/>
<rect x="1288" y="792" width="4.5" height="4.5" fill="none" stroke="#ffff00" stroke-width="1"/>
<rect x="1.0" y="800.0" width="1675.0" height="84.0" fill="#006fde"/>
<g shape-rendering="crispEdges">
<rect x="87.0" y="800.0" width="1.0" height="84.0" fill="#c0c0c0"/>
<rect x="88.0" y="800.0" width="1.0" height="84.0" fill="#ffffff"/>
<rect x="204.0" y="800.0" width="1.0" height="84.0" fill="#c0c0c0"/>
<rect x="205.0" y="800.0" width="1.0" height="84.0" fill="#ffffff"/>
<rect x="322.0" y="800.0" width="1.0" height="84.0" fill="#c0c0c0"/>
<rect x="323.0" y="800.0" width="1.0" height="84.0" fill="#ffffff"/>
<rect x="440.0" y="800.0" width="1.0" height="84.0" fill="#c0c0c0"/>
<rect x="441.0" y="800.0" width="1.0" height="84.0" fill="#ffffff"/>
<rect x="557.5" y="800.0" width="1.0" height="84.0" fill="#c0c0c0"/>
<rect x="558.5" y="800.0" width="1.0" height="84.0" fill="#ffffff"/>
<rect x="675.0" y="800.0" width="1.0" height="84.0" fill="#c0c0c0"/>
<rect x="676.0" y="800.0" width="1.0" height="84.0" fill="#ffffff"/>
<rect x="793.0" y="800.0" width="1.0" height="84.0" fill="#c0c0c0"/>
<rect x="794.0" y="800.0" width="1.0" height="84.0" fill="#ffffff"/>
<rect x="910.5" y="800.0" width="1.0" height="84.0" fill="#c0c0c0"/>
<rect x="911.5" y="800.0" width="1.0" height="84.0" fill="#ffffff"/>
</g>
<text x="8.7" y="818.0" font-size="12" fill="#000" text-anchor="start" font-weight="bold" textLength="38.4" lengthAdjust="spacingAndGlyphs">Sensor</text>
<text x="8.7" y="834.0" font-size="12" fill="#000" text-anchor="start" font-weight="bold" textLength="46.4" lengthAdjust="spacingAndGlyphs">MinWert</text>
<text x="8.7" y="850.0" font-size="12" fill="#000" text-anchor="start" font-weight="bold" textLength="49.4" lengthAdjust="spacingAndGlyphs">MaxWert</text>
<text x="8.7" y="866.0" font-size="12" fill="#000" text-anchor="start" font-weight="bold" textLength="71.5" lengthAdjust="spacingAndGlyphs">Durchschnitt</text>
<text x="8.7" y="882.0" font-size="12" fill="#000" text-anchor="start" font-weight="bold" textLength="71.5" lengthAdjust="spacingAndGlyphs">01.04. 23:58</text>
<text x="95.2" y="818.0" font-size="12" fill="#000" text-anchor="start" font-weight="bold" textLength="62.6" lengthAdjust="spacingAndGlyphs">Temperatur</text>
<text x="198.4" y="818.0" font-size="12" fill="#000" text-anchor="end" font-weight="bold" textLength="12.0" lengthAdjust="spacingAndGlyphs">°C</text>
<text transform="translate(100.7,834.0) scale(0.9,1)" font-size="12" fill="#000" text-anchor="start">23:58</text>
<text transform="translate(198.4,834.0) scale(0.9,1)" font-size="12" fill="#000" text-anchor="end">-0.6</text>
<text transform="translate(100.7,850.0) scale(0.9,1)" font-size="12" fill="#000" text-anchor="start">16:14</text>
<text transform="translate(198.4,850.0) scale(0.9,1)" font-size="12" fill="#000" text-anchor="end">10.0</text>
<text transform="translate(198.4,866.0) scale(0.9,1)" font-size="12" fill="#000" text-anchor="end">4.09</text>
<text x="198.4" y="882.0" font-size="12" fill="#000" text-anchor="end" font-weight="bold" textLength="21.2" lengthAdjust="spacingAndGlyphs">-0.6</text>
<text x="213.7" y="818.0" font-size="12" fill="#000" text-anchor="start" font-weight="bold" textLength="71.5" lengthAdjust="spacingAndGlyphs">Temp. +5 cm</text>
<text x="315.9" y="818.0" font-size="12" fill="#000" text-anchor="end" font-weight="bold" textLength="12.0" lengthAdjust="spacingAndGlyphs">°C</text>
<text transform="translate(219.2,834.0) scale(0.9,1)" font-size="12" fill="#000" text-anchor="start">23:58</text>
<text transform="translate(315.9,834.0) scale(0.9,1)" font-size="12" fill="#000" text-anchor="end">-4.4</text>
<text transform="translate(219.2,850.0) scale(0.9,1)" font-size="12" fill="#000" text-anchor="start">15:50</text>
<text transform="translate(315.9,850.0) scale(0.9,1)" font-size="12" fill="#000" text-anchor="end">21.7</text>
<text transform="translate(315.9,866.0) scale(0.9,1)" font-size="12" fill="#000" text-anchor="end">3.66</text>
<text x="315.9" y="882.0" font-size="12" fill="#000" text-anchor="end" font-weight="bold" textLength="20.5" lengthAdjust="spacingAndGlyphs">-4.4</text>
<text x="330.7" y="818.0" font-size="12" fill="#000" text-anchor="start" font-weight="bold" textLength="66.3" lengthAdjust="spacingAndGlyphs">Solarstrahlg</text>
<text x="433.6" y="818.0" font-size="12" fill="#000" text-anchor="end" font-weight="bold" textLength="30.0" lengthAdjust="spacingAndGlyphs">W/m²</text>
<text transform="translate(330.7,834.0) scale(0.9,1)" font-size="12" fill="#000" text-anchor="start">Elevation</text>
<text transform="translate(433.6,834.0) scale(0.9,1)" font-size="12" fill="#000" text-anchor="end">-31.071</text>
<text transform="translate(336.5,850.0) scale(0.9,1)" font-size="12" fill="#000" text-anchor="start">15:16</text>
<text transform="translate(433.6,850.0) scale(0.9,1)" font-size="12" fill="#000" text-anchor="end">842</text>
<text transform="translate(330.7,866.0) scale(0.9,1)" font-size="12" fill="#000" text-anchor="start">Tag:5:24 h</text>
<text transform="translate(433.6,866.0) scale(0.9,1)" font-size="12" fill="#000" text-anchor="end">241</text>
<text transform="translate(330.7,882.0) scale(0.9,1)" font-size="12" fill="#000" text-anchor="start">dunkel</text>
<text x="433.6" y="882.0" font-size="12" fill="#000" text-anchor="end" font-weight="bold" textLength="5.8" lengthAdjust="spacingAndGlyphs">0</text>
<text x="448.4" y="818.0" font-size="12" fill="#000" text-anchor="start" font-weight="bold" textLength="53.0" lengthAdjust="spacingAndGlyphs">Luftdruck</text>
<text x="552.8" y="818.0" font-size="12" fill="#000" text-anchor="end" font-weight="bold" textLength="21.7" lengthAdjust="spacingAndGlyphs">hPa</text>
<text transform="translate(453.9,834.0) scale(0.9,1)" font-size="12" fill="#000" text-anchor="start">23:58</text>
<text transform="translate(552.8,834.0) scale(0.9,1)" font-size="12" fill="#000" text-anchor="end">1023.3</text>
<text transform="translate(453.9,850.0) scale(0.9,1)" font-size="12" fill="#000" text-anchor="start">11:54</text>
<text transform="translate(552.8,850.0) scale(0.9,1)" font-size="12" fill="#000" text-anchor="end">1028.4</text>
<text transform="translate(448.4,866.0) scale(0.9,1)" font-size="12" fill="#000" text-anchor="start">^1.0hPa/h</text>
<text transform="translate(552.8,866.0) scale(0.9,1)" font-size="12" fill="#000" text-anchor="end">1026.3</text>
<text transform="translate(448.4,882.0) scale(0.9,1)" font-size="12" fill="#000" text-anchor="start">veränderlich</text>
<text x="552.8" y="882.0" font-size="12" fill="#00ff40" text-anchor="end" font-weight="bold" textLength="38.4" lengthAdjust="spacingAndGlyphs">1023.3</text>
<text x="566.0" y="818.0" font-size="12" fill="#000" text-anchor="start" font-weight="bold" textLength="57.4" lengthAdjust="spacingAndGlyphs">Windböen</text>
<text x="670.5" y="818.0" font-size="12" fill="#000" text-anchor="end" font-weight="bold" textLength="28.4" lengthAdjust="spacingAndGlyphs">km/h</text>
<text transform="translate(566.0,834.0) scale(0.9,1)" font-size="12" fill="#000" text-anchor="start">Ø 10 min.</text>
<text transform="translate(670.5,834.0) scale(0.9,1)" font-size="12" fill="#000" text-anchor="end">0.0</text>
<text transform="translate(572.5,850.0) scale(0.9,1)" font-size="12" fill="#000" text-anchor="start">17:06</text>
<text transform="translate(670.5,850.0) scale(0.9,1)" font-size="12" fill="#000" text-anchor="end">O-NO 9.7</text>
<text transform="translate(572.5,866.0) scale(0.9,1)" font-size="12" fill="#000" text-anchor="start">65.7 km</text>
<text transform="translate(670.5,866.0) scale(0.9,1)" font-size="12" fill="#000" text-anchor="end">2.7</text>
<text transform="translate(572.5,882.0) scale(0.9,1)" font-size="12" fill="#000" text-anchor="start">0 Bft N</text>
<text x="670.5" y="882.0" font-size="12" fill="#000" text-anchor="end" font-weight="bold" textLength="15.5" lengthAdjust="spacingAndGlyphs">0.0</text>
<text x="684.2" y="818.0" font-size="12" fill="#000" text-anchor="start" font-weight="bold" textLength="37.0" lengthAdjust="spacingAndGlyphs">Regen</text>
<text x="788.0" y="818.0" font-size="12" fill="#000" text-anchor="end" font-weight="bold" textLength="21.4" lengthAdjust="spacingAndGlyphs">l/m²</text>
<text transform="translate(684.2,834.0) scale(0.9,1)" font-size="12" fill="#000" text-anchor="start">0 min.</text>
<text transform="translate(690.2,850.0) scale(0.9,1)" font-size="12" fill="#000" text-anchor="start">23:58</text>
<text transform="translate(788.0,850.0) scale(0.9,1)" font-size="12" fill="#000" text-anchor="end">0.0</text>
<text transform="translate(684.2,866.0) scale(0.9,1)" font-size="12" fill="#000" text-anchor="start">Gesamt:</text>
<text transform="translate(788.0,866.0) scale(0.9,1)" font-size="12" fill="#000" text-anchor="end">0.0</text>
<text transform="translate(687.7,882.0) scale(0.9,1)" font-size="12" fill="#000" text-anchor="start">0.0 l/m²</text>
<text x="788.0" y="882.0" font-size="12" fill="#000" text-anchor="end" font-weight="bold" textLength="15.5" lengthAdjust="spacingAndGlyphs">0.0</text>
<text x="802.0" y="818.0" font-size="12" fill="#000" text-anchor="start" font-weight="bold" textLength="61.8" lengthAdjust="spacingAndGlyphs">Zeit Sonne</text>
<text x="905.5" y="818.0" font-size="12" fill="#000" text-anchor="end" font-weight="bold" textLength="18.4" lengthAdjust="spacingAndGlyphs">min</text>
<text transform="translate(808.0,850.0) scale(0.9,1)" font-size="12" fill="#000" text-anchor="start">19:32</text>
<text transform="translate(905.5,850.0) scale(0.9,1)" font-size="12" fill="#000" text-anchor="end">2</text>
<text transform="translate(802.0,866.0) scale(0.9,1)" font-size="12" fill="#000" text-anchor="start">5:24 h</text>
<text transform="translate(905.5,866.0) scale(0.9,1)" font-size="12" fill="#000" text-anchor="end">0</text>
<text x="905.5" y="882.0" font-size="12" fill="#000" text-anchor="end" font-weight="bold" textLength="5.8" lengthAdjust="spacingAndGlyphs">0</text>
<text transform="translate(920.0,818.0) scale(0.9,1)" font-size="12" fill="#000" text-anchor="start">Wolkenunterg</text>
<text transform="translate(1022.5,818.0) scale(0.9,1)" font-size="12" fill="#000" text-anchor="end">291m</text>
<text transform="translate(920.0,834.0) scale(0.9,1)" font-size="12" fill="#000" text-anchor="start">Sichtweite</text>
<text transform="translate(1022.5,834.0) scale(0.9,1)" font-size="12" fill="#000" text-anchor="end">2-5km</text>
<text transform="translate(920.0,850.0) scale(0.9,1)" font-size="12" fill="#000" text-anchor="start">Regen/Tag</text>
<text transform="translate(1022.5,850.0) scale(0.9,1)" font-size="12" fill="#000" text-anchor="end">0.0l/m²</text>
<text transform="translate(920.0,866.0) scale(0.9,1)" font-size="12" fill="#000" text-anchor="start">Neumond</text>
<text transform="translate(1022.5,866.0) scale(0.9,1)" font-size="12" fill="#000" text-anchor="end">17.04.26</text>
<text transform="translate(920.0,882.0) scale(0.9,1)" font-size="12" fill="#000" text-anchor="start">Vollmond</text>
<text transform="translate(1022.5,882.0) scale(0.9,1)" font-size="12" fill="#000" text-anchor="end">02.04.26</text>
</svg>
</body></html>
